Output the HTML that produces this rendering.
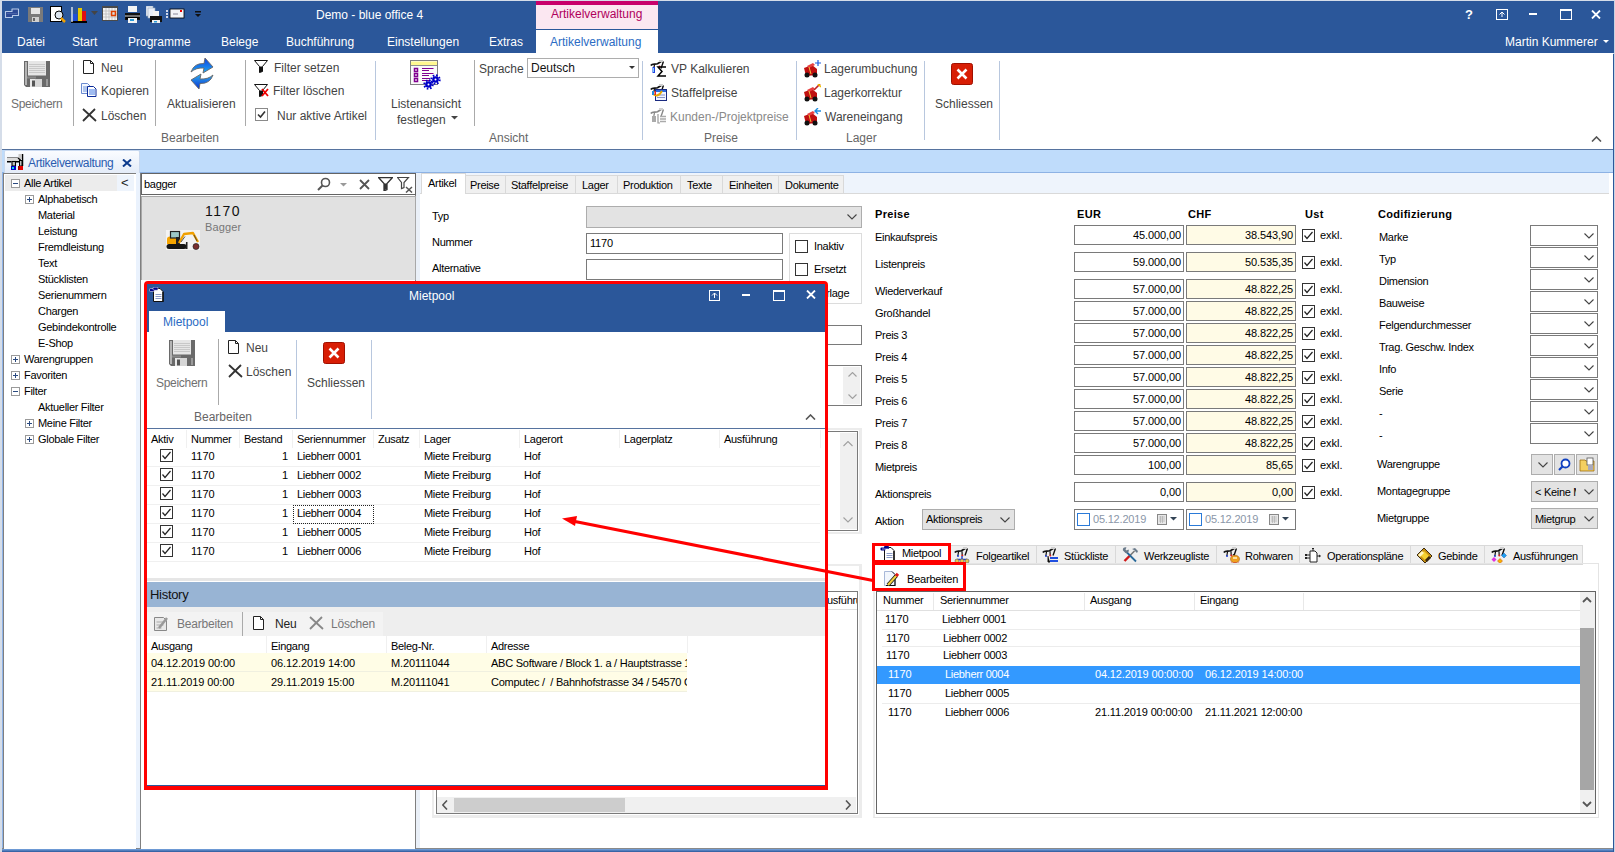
<!DOCTYPE html><html><head><meta charset="utf-8"><style>
html,body{margin:0;padding:0;}
body{width:1615px;height:852px;position:relative;overflow:hidden;background:#fff;font-family:"Liberation Sans", sans-serif;}
.a{position:absolute;box-sizing:border-box;}
.t{position:absolute;white-space:nowrap;}
</style></head><body>
<div class="a" style="left:0px;top:0px;width:1615px;height:852px;background:#d5dde9;"></div>
<div class="a" style="left:2px;top:1px;width:1612px;height:52px;background:#2b579a;"></div>
<svg class="a" style="left:4px;top:8px;" width="16" height="11" viewBox="0 0 16 11"><path d="M1.5 3.5 H8 V1 H14.5 V7.5 H8.5 V9.5 H1.5z" fill="#2c4a96" stroke="#b8cbe8" stroke-width="1.1" stroke-linejoin="round"/><path d="M3 5.5 H13" stroke="#4a64a8" stroke-width="1"/></svg>
<svg class="a" style="left:28px;top:7px;" width="15" height="15" viewBox="0 0 15 15"><rect x="0" y="0" width="15" height="15" fill="#7a7a7a"/><rect x="3" y="1" width="9" height="6" fill="#e5e5e5"/><rect x="4" y="10" width="7" height="5" fill="#d0d0d0"/><rect x="5" y="11" width="2" height="3" fill="#666"/></svg>
<svg class="a" style="left:50px;top:6px;" width="16" height="17" viewBox="0 0 16 17"><rect x="0.5" y="0.5" width="11" height="15" fill="#fff" stroke="#000"/><circle cx="9" cy="9" r="4" fill="#dde6f0" stroke="#000"/><path d="M11 12 l4 4" stroke="#f0a000" stroke-width="2.5"/></svg>
<svg class="a" style="left:71px;top:6px;" width="17" height="17" viewBox="0 0 17 17"><rect x="0" y="15" width="16" height="2" fill="#000"/><rect x="2" y="8" width="4" height="7" fill="#1f4fd8"/><rect x="7" y="2" width="4" height="13" fill="#e6c800"/><rect x="11" y="5" width="4" height="10" fill="#e01010"/><path d="M1 1 v15" stroke="#fff" stroke-width="1.2"/></svg>
<svg class="a" style="left:91px;top:11px;" width="7" height="5" viewBox="0 0 7 5"><path d="M0 0 h7 l-3.5 4z" fill="#444"/></svg>
<svg class="a" style="left:102px;top:6px;" width="16" height="15" viewBox="0 0 16 15"><rect x="0" y="0" width="16" height="15" fill="#4a4a4a"/><rect x="1" y="2" width="14" height="12" fill="#f2f2f2"/><path d="M1 5h14M1 8h14M1 11h14M4 2v12M7 2v12M10 2v12M13 2v12" stroke="#bbb" stroke-width="0.8"/><rect x="9.5" y="5.5" width="4" height="4" fill="none" stroke="#e04000" stroke-width="1.5"/></svg>
<svg class="a" style="left:124px;top:6px;" width="17" height="17" viewBox="0 0 17 17"><rect x="4" y="0" width="9" height="6" fill="#f4f4f4"/><path d="M1 7 h15 v7 h-15z" fill="#111"/><rect x="2" y="9" width="13" height="4" fill="#000"/><path d="M1 10 h15" stroke="#ddd"/><rect x="4" y="12" width="9" height="5" fill="#f4f4f4"/><rect x="6" y="13" width="4" height="2" fill="#2a9bd8"/></svg>
<svg class="a" style="left:146px;top:6px;" width="17" height="17" viewBox="0 0 17 17"><rect x="0" y="0" width="7" height="10" fill="#e8eef8" stroke="#9ab" stroke-width="0.6"/><rect x="2" y="2" width="7" height="10" fill="#e8eef8" stroke="#9ab" stroke-width="0.6"/><rect x="7" y="5" width="6" height="5" fill="#f4f4f4"/><path d="M4 10 h12 v6 h-12z" fill="#111"/><rect x="6" y="14" width="8" height="3" fill="#f0f0f0"/><rect x="8" y="15" width="3" height="1.5" fill="#2a9bd8"/></svg>
<svg class="a" style="left:166px;top:8px;" width="19" height="11" viewBox="0 0 19 11"><rect x="0" y="2" width="2" height="2" fill="#cfd8ea"/><rect x="0" y="5" width="2" height="2" fill="#cfd8ea"/><rect x="0" y="8" width="2" height="2" fill="#cfd8ea"/><rect x="4" y="1" width="14" height="9" fill="#f2f4f8" stroke="#000" stroke-width="0.8"/><rect x="14" y="2" width="2" height="2" fill="#e00"/><path d="M7 6 h5" stroke="#889" /></svg>
<svg class="a" style="left:195px;top:11px;" width="6" height="7" viewBox="0 0 6 7"><rect x="0" y="0" width="6" height="1.5" fill="#111"/><path d="M0 3 h6 l-3 3z" fill="#111"/></svg>
<div class="t " style="left:316px;top:7.84px;font-size:12px;line-height:14px;color:#fff;">Demo - blue office 4</div>
<div class="a" style="left:536px;top:1px;width:122px;height:4px;background:#c8006b;"></div>
<div class="a" style="left:536px;top:5px;width:122px;height:24px;background:#fbe7f1;"></div>
<div class="t " style="left:551px;top:6.84px;font-size:12px;line-height:14px;color:#b0005c;">Artikelverwaltung</div>
<div class="a" style="left:536px;top:29px;width:122px;height:1px;background:#2b579a;"></div>
<div class="a" style="left:536px;top:30px;width:122px;height:23px;background:#fff;"></div>
<div class="t " style="left:1465px;top:7.00px;font-size:13px;line-height:15px;color:#fff;"><b>?</b></div>
<svg class="a" style="left:1496px;top:9px;" width="12" height="11" viewBox="0 0 12 11"><rect x="0.5" y="0.5" width="11" height="10" fill="none" stroke="#fff"/><path d="M6 8 V3 M3.5 5.5 L6 3 L8.5 5.5" stroke="#fff" fill="none"/></svg>
<div class="a" style="left:1529px;top:13px;width:8px;height:2px;background:#fff;"></div>
<svg class="a" style="left:1560px;top:9px;" width="12" height="11" viewBox="0 0 12 11"><rect x="0.5" y="0.5" width="11" height="10" fill="none" stroke="#fff"/><rect x="0" y="0" width="12" height="2" fill="#fff"/></svg>
<svg class="a" style="left:1591px;top:10px;" width="10" height="9" viewBox="0 0 10 9"><path d="M1 0.5 L9 8.5 M9 0.5 L1 8.5" stroke="#fff" stroke-width="1.8"/></svg>
<div class="t " style="left:17px;top:34.84px;font-size:12px;line-height:14px;color:#fff;">Datei</div>
<div class="t " style="left:72px;top:34.84px;font-size:12px;line-height:14px;color:#fff;">Start</div>
<div class="t " style="left:128px;top:34.84px;font-size:12px;line-height:14px;color:#fff;">Programme</div>
<div class="t " style="left:221px;top:34.84px;font-size:12px;line-height:14px;color:#fff;">Belege</div>
<div class="t " style="left:286px;top:34.84px;font-size:12px;line-height:14px;color:#fff;">Buchführung</div>
<div class="t " style="left:387px;top:34.84px;font-size:12px;line-height:14px;color:#fff;">Einstellungen</div>
<div class="t " style="left:489px;top:34.84px;font-size:12px;line-height:14px;color:#fff;">Extras</div>
<div class="t " style="left:550px;top:34.84px;font-size:12px;line-height:14px;color:#2b6cc4;">Artikelverwaltung</div>
<div class="t " style="left:1505px;top:34.84px;font-size:12px;line-height:14px;color:#fff;">Martin Kummerer</div>
<svg class="a" style="left:1603px;top:40px;" width="6" height="4" viewBox="0 0 6 4"><path d="M0 0h6l-3 3z" fill="#fff"/></svg>
<div class="a" style="left:2px;top:53px;width:1611px;height:96px;background:#fff;"></div>
<div class="a" style="left:2px;top:149px;width:1611px;height:1px;background:#56739f;"></div>
<div class="a" style="left:2px;top:150px;width:1611px;height:23px;background:#bfdcfb;"></div>
<div class="a" style="left:2px;top:172px;width:1611px;height:1px;background:#8db2e4;"></div>
<svg class="a" style="left:24px;top:61px;" width="26" height="26" viewBox="0 0 26 26"><rect x="0" y="0" width="26" height="26" fill="#6a6a6a"/><rect x="1" y="1" width="2" height="23" fill="#b4b4b4"/><rect x="4" y="0" width="18" height="14.5" fill="#e6e6e6"/><path d="M5 3.5h16M5 5.5h16M5 7.5h16M5 9.5h16M5 11.5h16" stroke="#c4c4c4" stroke-width="0.9"/><rect x="3" y="15.5" width="9" height="2" fill="#8a8a8a"/><rect x="6" y="18" width="12" height="8" fill="#d6d6d6"/><rect x="6" y="18" width="5" height="8" fill="#e8e8e8"/><rect x="8" y="19.5" width="3" height="6" fill="#555"/><rect x="22" y="18" width="2" height="7" fill="#9a9a9a"/><path d="M0 24 L2 26 H0z" fill="#fff"/></svg>
<div class="t " style="left:11px;top:96.84px;font-size:12px;line-height:14px;color:#707070;letter-spacing:-0.3px;">Speichern</div>
<div class="a" style="left:73px;top:60px;width:1px;height:66px;background:#aaa;"></div>
<svg class="a" style="left:83px;top:60px;" width="12" height="15" viewBox="0 0 12 15"><path d="M0.5 0.5 h7 l3 3 v10 h-10z" fill="#fff" stroke="#222"/><path d="M7.5 0.5 v3 h3" fill="none" stroke="#222"/></svg>
<div class="t " style="left:101px;top:60.84px;font-size:12px;line-height:14px;color:#444;">Neu</div>
<svg class="a" style="left:81px;top:83px;" width="16" height="14" viewBox="0 0 16 14"><path d="M0.5 0.5 h6 l2.5 2.5 v7.5 h-8.5z" fill="#f4f8ff" stroke="#6a8ad0"/><path d="M2 4h5M2 6h5M2 8h4" stroke="#4a7ad0" stroke-width="0.8"/><path d="M6.5 3.5 h6 l2.5 2.5 v7.5 h-8.5z" fill="#fff" stroke="#0a2a9a"/><path d="M8 7h6M8 9h6M8 11h6" stroke="#2a6ae0" stroke-width="0.9"/></svg>
<div class="t " style="left:101px;top:83.84px;font-size:12px;line-height:14px;color:#444;">Kopieren</div>
<svg class="a" style="left:82px;top:108px;" width="15" height="14" viewBox="0 0 15 14"><path d="M1 1 L14 13 M13 1 L1 13" stroke="#333" stroke-width="1.8"/></svg>
<div class="t " style="left:101px;top:108.84px;font-size:12px;line-height:14px;color:#444;">Löschen</div>
<div class="a" style="left:155px;top:60px;width:1px;height:66px;background:#aaa;"></div>
<svg class="a" style="left:185px;top:57px;" width="34" height="34" viewBox="0 0 34 34"><defs><linearGradient id="ag" x1="0" y1="0" x2="0" y2="1"><stop offset="0" stop-color="#1040e0"/><stop offset="1" stop-color="#20a8f0"/></linearGradient><linearGradient id="ag2" x1="0" y1="1" x2="0" y2="0"><stop offset="0" stop-color="#0830d0"/><stop offset="1" stop-color="#30b0f0"/></linearGradient></defs><path d="M6 15 Q9 6 19 6.5 L20 1 L28 10 L18 16 L19 11 Q11 10.5 6 15z" fill="url(#ag)" stroke="#666" stroke-width="0.9" stroke-linejoin="round"/><path d="M28 18 Q25 27 15 26.5 L14 32 L6 23 L16 17 L15 22 Q23 22.5 28 18z" fill="url(#ag2)" stroke="#666" stroke-width="0.9" stroke-linejoin="round"/></svg>
<div class="t " style="left:167px;top:96.84px;font-size:12px;line-height:14px;color:#444;">Aktualisieren</div>
<div class="a" style="left:245px;top:60px;width:1px;height:66px;background:#aaa;"></div>
<svg class="a" style="left:254px;top:60px;" width="14" height="13" viewBox="0 0 14 13"><path d="M0.5 0.5 h13 l-5 6 v5 l-3 1 v-6z" fill="#fff" stroke="#111"/><path d="M5.5 6.5 v6 l3-1 v-5z" fill="#111"/></svg>
<div class="t " style="left:274px;top:60.84px;font-size:12px;line-height:14px;color:#444;">Filter setzen</div>
<svg class="a" style="left:254px;top:84px;" width="15" height="13" viewBox="0 0 15 13"><path d="M0.5 0.5 h13 l-5 6 v5 l-3 1 v-6z" fill="#fff" stroke="#111"/><path d="M5.5 6.5 v6 l3-1 v-5z" fill="#111"/><path d="M8 5 L14 12 M14 5 L8 12" stroke="#e00" stroke-width="1.8"/></svg>
<div class="t " style="left:273px;top:83.84px;font-size:12px;line-height:14px;color:#444;">Filter löschen</div>
<svg class="a" style="left:255px;top:108px;" width="14" height="14" viewBox="0 0 14 14"><rect x="0.5" y="0.5" width="12" height="12" fill="#fff" stroke="#8a8a8a"/><path d="M3 6.5 L5.5 9 L10 3.5" fill="none" stroke="#333" stroke-width="1.6"/></svg>
<div class="t " style="left:277px;top:108.84px;font-size:12px;line-height:14px;color:#444;">Nur aktive Artikel</div>
<div class="a" style="left:375px;top:61px;width:1px;height:79px;background:#b8c7de;"></div>
<div class="t " style="left:161px;top:130.84px;font-size:12px;line-height:14px;color:#666;">Bearbeiten</div>
<svg class="a" style="left:410px;top:60px;" width="31" height="31" viewBox="0 0 31 31"><rect x="0.5" y="0.5" width="27" height="24" fill="#fafafa" stroke="#808080"/><rect x="1" y="1.5" width="26" height="3.5" fill="#fff890"/><path d="M1 5.5h26" stroke="#909090"/><rect x="4.5" y="8.5" width="3" height="3" fill="none" stroke="#800090" stroke-width="1.5"/><rect x="4.5" y="13.5" width="3" height="3" fill="none" stroke="#800090" stroke-width="1.5"/><rect x="4.5" y="18.5" width="3" height="3" fill="none" stroke="#800090" stroke-width="1.5"/><path d="M12 8.5h11.5M12 10.5h7M12 13.5h11.5M12 15.5h7M12 18.5h8M12 20.5h7" stroke="#800090" stroke-width="1"/><circle cx="18.5" cy="24.5" r="4.2" fill="none" stroke="#0000c8" stroke-width="2" stroke-dasharray="1.6 1.7"/><circle cx="18.5" cy="24.5" r="3.3" fill="#0000c8"/><circle cx="18.5" cy="24.5" r="1" fill="#fff"/><circle cx="25.5" cy="19.5" r="4.2" fill="none" stroke="#0000c8" stroke-width="2" stroke-dasharray="1.6 1.7"/><circle cx="25.5" cy="19.5" r="3.3" fill="#0000c8"/><circle cx="25.5" cy="19.5" r="1" fill="#fff"/></svg>
<div class="t " style="left:391px;top:96.84px;font-size:12px;line-height:14px;color:#444;">Listenansicht</div>
<div class="t " style="left:397px;top:112.84px;font-size:12px;line-height:14px;color:#444;">festlegen</div>
<svg class="a" style="left:451px;top:116px;" width="7" height="4" viewBox="0 0 7 4"><path d="M0 0h7l-3.5 3.5z" fill="#444"/></svg>
<div class="a" style="left:474px;top:60px;width:1px;height:66px;background:#aaa;"></div>
<div class="t " style="left:479px;top:61.84px;font-size:12px;line-height:14px;color:#444;">Sprache</div>
<div class="a" style="left:527px;top:58px;width:112px;height:20px;background:#fff;border:1px solid #adadad;"></div>
<div class="t " style="left:531px;top:60.84px;font-size:12px;line-height:14px;color:#111;">Deutsch</div>
<svg class="a" style="left:629px;top:66px;" width="6" height="4" viewBox="0 0 6 4"><path d="M0 0h6l-3 3z" fill="#333"/></svg>
<div class="a" style="left:642px;top:61px;width:1px;height:79px;background:#b8c7de;"></div>
<div class="t " style="left:489px;top:130.84px;font-size:12px;line-height:14px;color:#666;">Ansicht</div>
<svg class="a" style="left:650px;top:60px;" width="17" height="17" viewBox="0 0 17 17"><path d="M0.8 5.5 C2.5 3.2 5 4.8 7.5 3.8 L11.5 1.2" stroke="#111" stroke-width="1.7" fill="none"/><path d="M11.8 0.8 L13.2 2.2 L11 8.5" stroke="#111" stroke-width="1.4" fill="none"/><path d="M4.5 5 L3.8 8" stroke="#111" stroke-width="1.2"/><rect x="9" y="0" width="4" height="2" fill="#d0d0d0"/><rect x="2.5" y="7" width="2.5" height="6" fill="#1f3fe0"/><rect x="3" y="8" width="1" height="4" fill="#7ad0ff"/><circle cx="9.5" cy="6.5" r="1" fill="#e02020"/><path d="M16 7 H8 L12 11.5 L8 16 H16" fill="none" stroke="#000" stroke-width="1.5"/></svg>
<div class="t " style="left:671px;top:61.84px;font-size:12px;line-height:14px;color:#444;">VP Kalkulieren</div>
<svg class="a" style="left:650px;top:84px;" width="17" height="17" viewBox="0 0 17 17"><path d="M0.8 5.5 C2.5 3.2 5 4.8 7.5 3.8 L11.5 1.2" stroke="#111" stroke-width="1.7" fill="none"/><path d="M11.8 0.8 L13.2 2.2 L11 8.5" stroke="#111" stroke-width="1.4" fill="none"/><path d="M4.5 5 L3.8 8" stroke="#111" stroke-width="1.2"/><rect x="9" y="0" width="4" height="2" fill="#d0d0d0"/><rect x="5.5" y="5.5" width="11" height="11" fill="#f0f4ff" stroke="#1a2a80"/><rect x="6" y="6" width="10" height="2" fill="#2a6ae0"/><path d="M7 11h8M7 13.5h8" stroke="#6a7ab8" stroke-width="0.8"/><path d="M3 10 Q8 14 12 7" stroke="#e8a800" stroke-width="2" fill="none"/><rect x="2" y="7" width="2" height="4" fill="#1f8fe0"/><rect x="4.5" y="7" width="1.5" height="4" fill="#e02020"/></svg>
<div class="t " style="left:671px;top:85.84px;font-size:12px;line-height:14px;color:#444;">Staffelpreise</div>
<svg class="a" style="left:650px;top:108px;" width="17" height="17" viewBox="0 0 17 17"><path d="M0.8 5.5 C2.5 3.2 5 4.8 7.5 3.8 L11.5 1.2" stroke="#888" stroke-width="1.7" fill="none"/><path d="M11.8 0.8 L13.2 2.2 L11 8.5" stroke="#888" stroke-width="1.4" fill="none"/><path d="M4.5 5 L3.8 8" stroke="#888" stroke-width="1.2"/><rect x="9" y="0" width="4" height="2" fill="#d0d0d0"/><rect x="2" y="8" width="4" height="6" fill="#aaa"/><path d="M8 6 V15 H10" stroke="#999" stroke-width="1.2" fill="none"/><path d="M10 8.5h6M10 11h6M10 13.5h6" stroke="#aaa" stroke-width="1.6"/></svg>
<div class="t " style="left:670px;top:109.84px;font-size:12px;line-height:14px;color:#8a8a8a;">Kunden-/Projektpreise</div>
<div class="a" style="left:796px;top:61px;width:1px;height:79px;background:#b8c7de;"></div>
<div class="t " style="left:704px;top:130.84px;font-size:12px;line-height:14px;color:#666;">Preise</div>
<svg class="a" style="left:803px;top:60px;" width="18" height="18" viewBox="0 0 18 18"><path d="M1 8 L9 5 L14 9 L14 15 L3 16z" fill="#c01010"/><path d="M4 6 L10 3 L12 5 L6 8z" fill="#e84040"/><circle cx="4" cy="15" r="2.5" fill="#111"/><circle cx="12" cy="15" r="2.5" fill="#111"/><path d="M6 7 l2 7" stroke="#f0c040" stroke-width="1"/><path d="M15 0 v6 M12 3 h6" stroke="#1f5fe0" stroke-width="1.2"/></svg>
<div class="t " style="left:824px;top:61.84px;font-size:12px;line-height:14px;color:#444;">Lagerumbuchung</div>
<svg class="a" style="left:803px;top:84px;" width="18" height="18" viewBox="0 0 18 18"><path d="M1 8 L9 5 L14 9 L14 15 L3 16z" fill="#c01010"/><path d="M4 6 L10 3 L12 5 L6 8z" fill="#e84040"/><circle cx="4" cy="15" r="2.5" fill="#111"/><circle cx="12" cy="15" r="2.5" fill="#111"/><path d="M6 7 l2 7" stroke="#f0c040" stroke-width="1"/><path d="M11 6 L17 0" stroke="#c02020" stroke-width="1.6"/><path d="M15 0 l3 3" stroke="#f0c000" stroke-width="1.6"/></svg>
<div class="t " style="left:824px;top:85.84px;font-size:12px;line-height:14px;color:#444;">Lagerkorrektur</div>
<svg class="a" style="left:803px;top:108px;" width="18" height="18" viewBox="0 0 18 18"><path d="M1 8 L9 5 L14 9 L14 15 L3 16z" fill="#c01010"/><path d="M4 6 L10 3 L12 5 L6 8z" fill="#e84040"/><circle cx="4" cy="15" r="2.5" fill="#111"/><circle cx="12" cy="15" r="2.5" fill="#111"/><path d="M6 7 l2 7" stroke="#f0c040" stroke-width="1"/><path d="M12 3 h6 M15 0 l-3 3 l3 3" stroke="#1f8fe0" stroke-width="1.4" fill="none"/></svg>
<div class="t " style="left:825px;top:109.84px;font-size:12px;line-height:14px;color:#444;">Wareneingang</div>
<div class="a" style="left:924px;top:61px;width:1px;height:79px;background:#b8c7de;"></div>
<div class="t " style="left:846px;top:130.84px;font-size:12px;line-height:14px;color:#666;">Lager</div>
<svg class="a" style="left:951px;top:63px;" width="22" height="22" viewBox="0 0 22 22"><rect x="0.5" y="0.5" width="21" height="21" rx="2" fill="#d81e05" stroke="#a01000"/><path d="M6.5 6.5 L15.5 15.5 M15.5 6.5 L6.5 15.5" stroke="#fff" stroke-width="2.6"/></svg>
<div class="t " style="left:935px;top:96.84px;font-size:12px;line-height:14px;color:#444;">Schliessen</div>
<div class="a" style="left:999px;top:61px;width:1px;height:79px;background:#b8c7de;"></div>
<svg class="a" style="left:1591px;top:136px;" width="11" height="6" viewBox="0 0 11 6"><path d="M1 5.5 L5.5 1 L10 5.5" fill="none" stroke="#555" stroke-width="1.6"/></svg>
<div class="a" style="left:4px;top:150px;width:136px;height:23px;background:linear-gradient(#fafcff,#e4ecf8);border:1px solid #c9d9ef;border-bottom:none;border-radius:2px 2px 0 0;"></div>
<svg class="a" style="left:4px;top:150px;" width="24" height="22" viewBox="0 0 24 22"><rect x="3" y="7" width="13" height="4.5" fill="#dcdcdc"/><path d="M3 7.5 H14" stroke="#888" stroke-width="1"/><path d="M3 11.8 H7.5 M11 11.8 H15" stroke="#000" stroke-width="1.4"/><rect x="14.5" y="4" width="4" height="5" fill="#c8c8c8"/><path d="M18.6 4 V16" stroke="#000" stroke-width="1.3"/><path d="M14 8 L17 10.5" stroke="#000" stroke-width="1.2"/><rect x="8" y="11.5" width="3.5" height="4.5" fill="#c0c0c0" stroke="#000" stroke-width="1.1"/><rect x="15.5" y="10.5" width="2.5" height="5.5" fill="#c0c0c0" stroke="#000" stroke-width="1"/><rect x="7" y="16" width="5" height="4" fill="#0000c8"/><rect x="8" y="17" width="2" height="2" fill="#00e0e8"/><rect x="14" y="16" width="5" height="4" fill="#e80000"/><rect x="14" y="16" width="1.5" height="4" fill="#900"/></svg>
<div class="t " style="left:28px;top:155.84px;font-size:12px;line-height:14px;color:#2a5cb0;letter-spacing:-0.35px;">Artikelverwaltung</div>
<svg class="a" style="left:122px;top:159px;" width="10" height="8" viewBox="0 0 10 8"><path d="M1 0.5 L9 7.5 M9 0.5 L1 7.5" stroke="#0c3a8c" stroke-width="2"/></svg>
<div class="a" style="left:2px;top:173px;width:1px;height:676px;background:#8fb4e8;"></div>
<div class="a" style="left:2px;top:848px;width:1611px;height:1px;background:#8a8a8a;"></div>
<div class="a" style="left:2px;top:849px;width:1611px;height:3px;background:linear-gradient(#7aa6e0,#2b579a);"></div>
<div class="a" style="left:1613px;top:54px;width:1px;height:798px;background:#2b579a;"></div>
<div class="a" style="left:1614px;top:0px;width:1px;height:852px;background:#c9d3e2;"></div>
<div class="a" style="left:1609px;top:173px;width:1px;height:675px;background:#c0c0c0;"></div>
<div class="a" style="left:3px;top:173px;width:134px;height:676px;background:#fff;border:1px solid #7f7f7f;border-bottom:none;"></div>
<div class="a" style="left:136px;top:173px;width:5px;height:675px;background:#eaf2fd;"></div>
<div class="a" style="left:5px;top:175px;width:112px;height:16px;background:#ececec;"></div>
<div class="a" style="left:117px;top:175px;width:17px;height:16px;background:#eef4fc;"></div>
<div class="t " style="left:121px;top:175.00px;font-size:13px;line-height:15px;color:#222;">&lt;</div>
<svg class="a" style="left:11px;top:179px;" width="9" height="9" viewBox="0 0 9 9"><rect x="0.5" y="0.5" width="8" height="8" fill="#fff" stroke="#9a9a9a"/><path d="M2 4.5h5" stroke="#2a4a80" stroke-width="1"/></svg>
<div class="t " style="left:24px;top:176.69px;font-size:11px;line-height:13px;color:#000;letter-spacing:-0.3px;">Alle Artikel</div>
<svg class="a" style="left:25px;top:195px;" width="9" height="9" viewBox="0 0 9 9"><rect x="0.5" y="0.5" width="8" height="8" fill="#fff" stroke="#9a9a9a"/><path d="M2 4.5h5M4.5 2v5" stroke="#2a4a80" stroke-width="1"/></svg>
<div class="t " style="left:38px;top:192.69px;font-size:11px;line-height:13px;color:#000;letter-spacing:-0.3px;">Alphabetisch</div>
<div class="t " style="left:38px;top:208.69px;font-size:11px;line-height:13px;color:#000;letter-spacing:-0.3px;">Material</div>
<div class="t " style="left:38px;top:224.69px;font-size:11px;line-height:13px;color:#000;letter-spacing:-0.3px;">Leistung</div>
<div class="t " style="left:38px;top:240.69px;font-size:11px;line-height:13px;color:#000;letter-spacing:-0.3px;">Fremdleistung</div>
<div class="t " style="left:38px;top:256.69px;font-size:11px;line-height:13px;color:#000;letter-spacing:-0.3px;">Text</div>
<div class="t " style="left:38px;top:272.69px;font-size:11px;line-height:13px;color:#000;letter-spacing:-0.3px;">Stücklisten</div>
<div class="t " style="left:38px;top:288.69px;font-size:11px;line-height:13px;color:#000;letter-spacing:-0.3px;">Serienummern</div>
<div class="t " style="left:38px;top:304.69px;font-size:11px;line-height:13px;color:#000;letter-spacing:-0.3px;">Chargen</div>
<div class="t " style="left:38px;top:320.69px;font-size:11px;line-height:13px;color:#000;letter-spacing:-0.3px;">Gebindekontrolle</div>
<div class="t " style="left:38px;top:336.69px;font-size:11px;line-height:13px;color:#000;letter-spacing:-0.3px;">E-Shop</div>
<svg class="a" style="left:11px;top:355px;" width="9" height="9" viewBox="0 0 9 9"><rect x="0.5" y="0.5" width="8" height="8" fill="#fff" stroke="#9a9a9a"/><path d="M2 4.5h5M4.5 2v5" stroke="#2a4a80" stroke-width="1"/></svg>
<div class="t " style="left:24px;top:352.69px;font-size:11px;line-height:13px;color:#000;letter-spacing:-0.3px;">Warengruppen</div>
<svg class="a" style="left:11px;top:371px;" width="9" height="9" viewBox="0 0 9 9"><rect x="0.5" y="0.5" width="8" height="8" fill="#fff" stroke="#9a9a9a"/><path d="M2 4.5h5M4.5 2v5" stroke="#2a4a80" stroke-width="1"/></svg>
<div class="t " style="left:24px;top:368.69px;font-size:11px;line-height:13px;color:#000;letter-spacing:-0.3px;">Favoriten</div>
<svg class="a" style="left:11px;top:387px;" width="9" height="9" viewBox="0 0 9 9"><rect x="0.5" y="0.5" width="8" height="8" fill="#fff" stroke="#9a9a9a"/><path d="M2 4.5h5" stroke="#2a4a80" stroke-width="1"/></svg>
<div class="t " style="left:24px;top:384.69px;font-size:11px;line-height:13px;color:#000;letter-spacing:-0.3px;">Filter</div>
<div class="t " style="left:38px;top:400.69px;font-size:11px;line-height:13px;color:#000;letter-spacing:-0.3px;">Aktueller Filter</div>
<svg class="a" style="left:25px;top:419px;" width="9" height="9" viewBox="0 0 9 9"><rect x="0.5" y="0.5" width="8" height="8" fill="#fff" stroke="#9a9a9a"/><path d="M2 4.5h5M4.5 2v5" stroke="#2a4a80" stroke-width="1"/></svg>
<div class="t " style="left:38px;top:416.69px;font-size:11px;line-height:13px;color:#000;letter-spacing:-0.3px;">Meine Filter</div>
<svg class="a" style="left:25px;top:435px;" width="9" height="9" viewBox="0 0 9 9"><rect x="0.5" y="0.5" width="8" height="8" fill="#fff" stroke="#9a9a9a"/><path d="M2 4.5h5M4.5 2v5" stroke="#2a4a80" stroke-width="1"/></svg>
<div class="t " style="left:38px;top:432.69px;font-size:11px;line-height:13px;color:#000;letter-spacing:-0.3px;">Globale Filter</div>
<div class="a" style="left:140px;top:173px;width:276px;height:676px;background:#fff;border-left:1px solid #7f7f7f;border-right:1px solid #7f7f7f;"></div>
<div class="a" style="left:416px;top:173px;width:4px;height:675px;background:#eaf0f8;"></div>
<div class="a" style="left:141px;top:173px;width:275px;height:22px;background:#fff;border:1px solid #646464;"></div>
<div class="t " style="left:144px;top:177.69px;font-size:11px;line-height:13px;color:#000;letter-spacing:-0.3px;">bagger</div>
<svg class="a" style="left:317px;top:177px;" width="14" height="14" viewBox="0 0 14 14"><circle cx="8.5" cy="5.5" r="4" fill="none" stroke="#555" stroke-width="1.6"/><path d="M5.5 8.5 L1 13" stroke="#555" stroke-width="2"/></svg>
<svg class="a" style="left:340px;top:183px;" width="7" height="4" viewBox="0 0 7 4"><path d="M0 0h7l-3.5 3.5z" fill="#999"/></svg>
<svg class="a" style="left:359px;top:179px;" width="11" height="11" viewBox="0 0 11 11"><path d="M1 1 L10 10 M10 1 L1 10" stroke="#555" stroke-width="1.8"/></svg>
<svg class="a" style="left:378px;top:177px;" width="15" height="14" viewBox="0 0 15 14"><path d="M0.5 0.5 h14 l-5.5 6 v6 l-3 1.5 v-7.5z" fill="#fff" stroke="#333" stroke-width="1.3"/><path d="M6 6.5 v7 l3-1.5 v-5.5z" fill="#333"/></svg>
<svg class="a" style="left:397px;top:177px;" width="16" height="16" viewBox="0 0 16 16"><path d="M0.5 0.5 h11 l-4.5 5 v5 l-2.5 1 v-6z" fill="#fff" stroke="#444" stroke-width="1.2"/><path d="M9 10 L15 15.5 M15 10 L9 15.5" stroke="#555" stroke-width="1.5"/></svg>
<div class="a" style="left:141px;top:196px;width:275px;height:84px;background:#e1e1e1;border:1px solid #a8a8a8;border-bottom:none;"></div>
<svg class="a" style="left:166px;top:230px;" width="34" height="20" viewBox="0 0 34 20"><rect x="0" y="0" width="34" height="20" fill="#f3f3f3"/><path d="M1 9 Q1 6.5 4 6.5 L11 6.5 L11 14 L1 14z" fill="#f5a400"/><rect x="4.5" y="1.5" width="9" height="6.5" fill="#9cc8c8" stroke="#222" stroke-width="1.2"/><rect x="10" y="7" width="4" height="7" fill="#222"/><rect x="0.5" y="14" width="20" height="5" rx="2.5" fill="#161616"/><path d="M20 12 L21.5 12 L21.5 19 L19.5 19z" fill="#222"/><path d="M13 13 L18 4 L27 3 L32 12" stroke="#f0a000" stroke-width="2.3" fill="none" stroke-linejoin="round"/><path d="M15 12 L19 6.5 M28 5 L31 11" stroke="#333" stroke-width="0.8"/><circle cx="30" cy="16.5" r="3" fill="#7a3030" stroke="#222" stroke-width="0.7"/></svg>
<div class="t " style="left:205px;top:202.65px;font-size:14px;line-height:17px;color:#111;letter-spacing:1.5px;">1170</div>
<div class="t " style="left:205px;top:220.69px;font-size:11px;line-height:13px;color:#777;letter-spacing:0.15px;">Bagger</div>
<div class="a" style="left:420px;top:173px;width:1193px;height:675px;background:#fff;"></div>
<div class="a" style="left:420px;top:173px;width:1189px;height:20px;background:#eef4fc;"></div>
<div class="a" style="left:420px;top:193px;width:1189px;height:1px;background:#d9d9d9;"></div>
<div class="a" style="left:465px;top:175px;width:41px;height:19px;background:#f0f0f0;border:1px solid #d9d9d9;"></div>
<div class="t " style="left:470px;top:178.69px;font-size:11px;line-height:13px;color:#000;letter-spacing:-0.3px;">Preise</div>
<div class="a" style="left:505px;top:175px;width:71px;height:19px;background:#f0f0f0;border:1px solid #d9d9d9;"></div>
<div class="t " style="left:511px;top:178.69px;font-size:11px;line-height:13px;color:#000;letter-spacing:-0.3px;">Staffelpreise</div>
<div class="a" style="left:575px;top:175px;width:43px;height:19px;background:#f0f0f0;border:1px solid #d9d9d9;"></div>
<div class="t " style="left:582px;top:178.69px;font-size:11px;line-height:13px;color:#000;letter-spacing:-0.3px;">Lager</div>
<div class="a" style="left:617px;top:175px;width:64px;height:19px;background:#f0f0f0;border:1px solid #d9d9d9;"></div>
<div class="t " style="left:623px;top:178.69px;font-size:11px;line-height:13px;color:#000;letter-spacing:-0.3px;">Produktion</div>
<div class="a" style="left:680px;top:175px;width:43px;height:19px;background:#f0f0f0;border:1px solid #d9d9d9;"></div>
<div class="t " style="left:687px;top:178.69px;font-size:11px;line-height:13px;color:#000;letter-spacing:-0.3px;">Texte</div>
<div class="a" style="left:722px;top:175px;width:57px;height:19px;background:#f0f0f0;border:1px solid #d9d9d9;"></div>
<div class="t " style="left:729px;top:178.69px;font-size:11px;line-height:13px;color:#000;letter-spacing:-0.3px;">Einheiten</div>
<div class="a" style="left:778px;top:175px;width:66px;height:19px;background:#f0f0f0;border:1px solid #d9d9d9;"></div>
<div class="t " style="left:785px;top:178.69px;font-size:11px;line-height:13px;color:#000;letter-spacing:-0.3px;">Dokumente</div>
<div class="a" style="left:421px;top:173px;width:45px;height:21px;background:#fff;border:1px solid #d9d9d9;border-bottom:none;"></div>
<div class="t " style="left:428px;top:176.69px;font-size:11px;line-height:13px;color:#000;letter-spacing:-0.3px;">Artikel</div>
<div class="t " style="left:432px;top:209.69px;font-size:11px;line-height:13px;color:#000;letter-spacing:-0.3px;">Typ</div>
<div class="a" style="left:586px;top:206px;width:276px;height:22px;background:#e3e3e3;border:1px solid #adadad;"></div>
<svg class="a" style="left:847px;top:214px;" width="10" height="6" viewBox="0 0 10 6"><path d="M0.5 0.5 L5 5 L9.5 0.5" fill="none" stroke="#444" stroke-width="1.1"/></svg>
<div class="t " style="left:432px;top:235.69px;font-size:11px;line-height:13px;color:#000;letter-spacing:-0.3px;">Nummer</div>
<div class="a" style="left:586px;top:233px;width:197px;height:21px;background:#fff;border:1px solid #7a7a7a;"></div>
<div class="t " style="left:590px;top:236.69px;font-size:11px;line-height:13px;color:#000;letter-spacing:-0.2px;">1170</div>
<div class="t " style="left:432px;top:261.69px;font-size:11px;line-height:13px;color:#000;letter-spacing:-0.3px;">Alternative</div>
<div class="a" style="left:586px;top:259px;width:197px;height:21px;background:#fff;border:1px solid #7a7a7a;"></div>
<div class="a" style="left:789px;top:233px;width:73px;height:71px;border:1px solid #dcdcdc;"></div>
<svg class="a" style="left:795px;top:240px;" width="14" height="14" viewBox="0 0 14 14"><rect x="0.5" y="0.5" width="12" height="12" fill="#fff" stroke="#333"/></svg>
<div class="t " style="left:814px;top:239.69px;font-size:11px;line-height:13px;color:#000;letter-spacing:-0.3px;">Inaktiv</div>
<svg class="a" style="left:795px;top:263px;" width="14" height="14" viewBox="0 0 14 14"><rect x="0.5" y="0.5" width="12" height="12" fill="#fff" stroke="#333"/></svg>
<div class="t " style="left:814px;top:262.69px;font-size:11px;line-height:13px;color:#000;letter-spacing:-0.3px;">Ersetzt</div>
<div class="t " style="left:814px;top:286.69px;font-size:11px;line-height:13px;color:#000;letter-spacing:-0.3px;">Vorlage</div>
<div class="a" style="left:700px;top:325px;width:162px;height:20px;background:#fff;border:1px solid #7a7a7a;"></div>
<div class="a" style="left:700px;top:365px;width:162px;height:41px;background:#fff;border:1px solid #7a7a7a;"></div>
<div class="a" style="left:843px;top:367px;width:17px;height:37px;background:#f0f0f0;"></div>
<svg class="a" style="left:848px;top:372px;" width="9" height="5" viewBox="0 0 9 5"><path d="M0.5 4.5 L4.5 0.5 L8.5 4.5" fill="none" stroke="#a0a0a0" stroke-width="1.1"/></svg>
<svg class="a" style="left:848px;top:394px;" width="9" height="5" viewBox="0 0 9 5"><path d="M0.5 0.5 L4.5 4.5 L8.5 0.5" fill="none" stroke="#a0a0a0" stroke-width="1.1"/></svg>
<div class="a" style="left:432px;top:428px;width:430px;height:106px;border:2px solid #ececec;border-right-width:3px;"></div>
<div class="a" style="left:436px;top:431px;width:422px;height:100px;background:#fff;border:1px solid #7a7a7a;"></div>
<div class="a" style="left:840px;top:433px;width:17px;height:96px;background:#f0f0f0;"></div>
<svg class="a" style="left:843px;top:441px;" width="10" height="6" viewBox="0 0 10 6"><path d="M0.5 5 L5 0.5 L9.5 5" fill="none" stroke="#a0a0a0" stroke-width="1.1"/></svg>
<svg class="a" style="left:843px;top:517px;" width="10" height="6" viewBox="0 0 10 6"><path d="M0.5 0.5 L5 5 L9.5 0.5" fill="none" stroke="#a0a0a0" stroke-width="1.1"/></svg>
<div class="a" style="left:432px;top:564px;width:430px;height:254px;border:2px solid #ececec;border-right-width:3px;border-bottom-width:3px;"></div>
<div class="a" style="left:436px;top:591px;width:422px;height:223px;background:#fff;border:1px solid #7a7a7a;"></div>
<div class="t " style="left:820px;top:593.69px;font-size:11px;line-height:13px;color:#000;letter-spacing:-0.3px;width:37px;overflow:hidden;">Ausführung</div>
<div class="a" style="left:437px;top:609px;width:420px;height:1px;background:#e0e0e0;"></div>
<div class="a" style="left:437px;top:797px;width:419px;height:16px;background:#f0f0f0;"></div>
<div class="a" style="left:454px;top:798px;width:171px;height:14px;background:#cdcdcd;"></div>
<svg class="a" style="left:442px;top:800px;" width="6" height="10" viewBox="0 0 6 10"><path d="M5 0.5 L0.8 5 L5 9.5" fill="none" stroke="#555" stroke-width="1.6"/></svg>
<svg class="a" style="left:845px;top:800px;" width="6" height="10" viewBox="0 0 6 10"><path d="M1 0.5 L5.2 5 L1 9.5" fill="none" stroke="#555" stroke-width="1.6"/></svg>
<div class="t " style="left:875px;top:207.69px;font-size:11px;line-height:13px;color:#000;letter-spacing:0.3px;"><b>Preise</b></div>
<div class="t " style="left:1077px;top:207.69px;font-size:11px;line-height:13px;color:#000;letter-spacing:0.3px;"><b>EUR</b></div>
<div class="t " style="left:1188px;top:207.69px;font-size:11px;line-height:13px;color:#000;letter-spacing:0.3px;"><b>CHF</b></div>
<div class="t " style="left:1305px;top:207.69px;font-size:11px;line-height:13px;color:#000;letter-spacing:0.3px;"><b>Ust</b></div>
<div class="t " style="left:1378px;top:207.69px;font-size:11px;line-height:13px;color:#000;letter-spacing:0.3px;"><b>Codifizierung</b></div>
<div class="t " style="left:875px;top:230.69px;font-size:11px;line-height:13px;color:#000;letter-spacing:-0.3px;">Einkaufspreis</div>
<div class="a" style="left:1074px;top:225px;width:110px;height:20px;background:#fff;border:1px solid #7a7a7a;"></div>
<div class="t" style="right:434px;top:228.69px;font-size:11px;line-height:13px;color:#000;letter-spacing:-0.1px;">45.000,00</div>
<div class="a" style="left:1186px;top:225px;width:110px;height:20px;background:#fffbe6;border:1px solid #7a7a7a;"></div>
<div class="t" style="right:322px;top:228.69px;font-size:11px;line-height:13px;color:#000;letter-spacing:-0.1px;">38.543,90</div>
<svg class="a" style="left:1302px;top:229px;" width="13" height="13" viewBox="0 0 13 13"><rect x="0.5" y="0.5" width="12" height="12" fill="#fff" stroke="#333"/><path d="M2.5 6.5 L5 9.5 L10.5 3" fill="none" stroke="#222" stroke-width="1.2"/></svg>
<div class="t " style="left:1320px;top:228.69px;font-size:11px;line-height:13px;color:#000;letter-spacing:0px;">exkl.</div>
<div class="t " style="left:875px;top:257.69px;font-size:11px;line-height:13px;color:#000;letter-spacing:-0.3px;">Listenpreis</div>
<div class="a" style="left:1074px;top:252px;width:110px;height:20px;background:#fff;border:1px solid #7a7a7a;"></div>
<div class="t" style="right:434px;top:255.69px;font-size:11px;line-height:13px;color:#000;letter-spacing:-0.1px;">59.000,00</div>
<div class="a" style="left:1186px;top:252px;width:110px;height:20px;background:#fffbe6;border:1px solid #7a7a7a;"></div>
<div class="t" style="right:322px;top:255.69px;font-size:11px;line-height:13px;color:#000;letter-spacing:-0.1px;">50.535,35</div>
<svg class="a" style="left:1302px;top:256px;" width="13" height="13" viewBox="0 0 13 13"><rect x="0.5" y="0.5" width="12" height="12" fill="#fff" stroke="#333"/><path d="M2.5 6.5 L5 9.5 L10.5 3" fill="none" stroke="#222" stroke-width="1.2"/></svg>
<div class="t " style="left:1320px;top:255.69px;font-size:11px;line-height:13px;color:#000;letter-spacing:0px;">exkl.</div>
<div class="t " style="left:875px;top:284.69px;font-size:11px;line-height:13px;color:#000;letter-spacing:-0.3px;">Wiederverkauf</div>
<div class="a" style="left:1074px;top:279px;width:110px;height:20px;background:#fff;border:1px solid #7a7a7a;"></div>
<div class="t" style="right:434px;top:282.69px;font-size:11px;line-height:13px;color:#000;letter-spacing:-0.1px;">57.000,00</div>
<div class="a" style="left:1186px;top:279px;width:110px;height:20px;background:#fffbe6;border:1px solid #7a7a7a;"></div>
<div class="t" style="right:322px;top:282.69px;font-size:11px;line-height:13px;color:#000;letter-spacing:-0.1px;">48.822,25</div>
<svg class="a" style="left:1302px;top:283px;" width="13" height="13" viewBox="0 0 13 13"><rect x="0.5" y="0.5" width="12" height="12" fill="#fff" stroke="#333"/><path d="M2.5 6.5 L5 9.5 L10.5 3" fill="none" stroke="#222" stroke-width="1.2"/></svg>
<div class="t " style="left:1320px;top:282.69px;font-size:11px;line-height:13px;color:#000;letter-spacing:0px;">exkl.</div>
<div class="t " style="left:875px;top:306.69px;font-size:11px;line-height:13px;color:#000;letter-spacing:-0.3px;">Großhandel</div>
<div class="a" style="left:1074px;top:301px;width:110px;height:20px;background:#fff;border:1px solid #7a7a7a;"></div>
<div class="t" style="right:434px;top:304.69px;font-size:11px;line-height:13px;color:#000;letter-spacing:-0.1px;">57.000,00</div>
<div class="a" style="left:1186px;top:301px;width:110px;height:20px;background:#fffbe6;border:1px solid #7a7a7a;"></div>
<div class="t" style="right:322px;top:304.69px;font-size:11px;line-height:13px;color:#000;letter-spacing:-0.1px;">48.822,25</div>
<svg class="a" style="left:1302px;top:305px;" width="13" height="13" viewBox="0 0 13 13"><rect x="0.5" y="0.5" width="12" height="12" fill="#fff" stroke="#333"/><path d="M2.5 6.5 L5 9.5 L10.5 3" fill="none" stroke="#222" stroke-width="1.2"/></svg>
<div class="t " style="left:1320px;top:304.69px;font-size:11px;line-height:13px;color:#000;letter-spacing:0px;">exkl.</div>
<div class="t " style="left:875px;top:328.69px;font-size:11px;line-height:13px;color:#000;letter-spacing:-0.3px;">Preis 3</div>
<div class="a" style="left:1074px;top:323px;width:110px;height:20px;background:#fff;border:1px solid #7a7a7a;"></div>
<div class="t" style="right:434px;top:326.69px;font-size:11px;line-height:13px;color:#000;letter-spacing:-0.1px;">57.000,00</div>
<div class="a" style="left:1186px;top:323px;width:110px;height:20px;background:#fffbe6;border:1px solid #7a7a7a;"></div>
<div class="t" style="right:322px;top:326.69px;font-size:11px;line-height:13px;color:#000;letter-spacing:-0.1px;">48.822,25</div>
<svg class="a" style="left:1302px;top:327px;" width="13" height="13" viewBox="0 0 13 13"><rect x="0.5" y="0.5" width="12" height="12" fill="#fff" stroke="#333"/><path d="M2.5 6.5 L5 9.5 L10.5 3" fill="none" stroke="#222" stroke-width="1.2"/></svg>
<div class="t " style="left:1320px;top:326.69px;font-size:11px;line-height:13px;color:#000;letter-spacing:0px;">exkl.</div>
<div class="t " style="left:875px;top:350.69px;font-size:11px;line-height:13px;color:#000;letter-spacing:-0.3px;">Preis 4</div>
<div class="a" style="left:1074px;top:345px;width:110px;height:20px;background:#fff;border:1px solid #7a7a7a;"></div>
<div class="t" style="right:434px;top:348.69px;font-size:11px;line-height:13px;color:#000;letter-spacing:-0.1px;">57.000,00</div>
<div class="a" style="left:1186px;top:345px;width:110px;height:20px;background:#fffbe6;border:1px solid #7a7a7a;"></div>
<div class="t" style="right:322px;top:348.69px;font-size:11px;line-height:13px;color:#000;letter-spacing:-0.1px;">48.822,25</div>
<svg class="a" style="left:1302px;top:349px;" width="13" height="13" viewBox="0 0 13 13"><rect x="0.5" y="0.5" width="12" height="12" fill="#fff" stroke="#333"/><path d="M2.5 6.5 L5 9.5 L10.5 3" fill="none" stroke="#222" stroke-width="1.2"/></svg>
<div class="t " style="left:1320px;top:348.69px;font-size:11px;line-height:13px;color:#000;letter-spacing:0px;">exkl.</div>
<div class="t " style="left:875px;top:372.69px;font-size:11px;line-height:13px;color:#000;letter-spacing:-0.3px;">Preis 5</div>
<div class="a" style="left:1074px;top:367px;width:110px;height:20px;background:#fff;border:1px solid #7a7a7a;"></div>
<div class="t" style="right:434px;top:370.69px;font-size:11px;line-height:13px;color:#000;letter-spacing:-0.1px;">57.000,00</div>
<div class="a" style="left:1186px;top:367px;width:110px;height:20px;background:#fffbe6;border:1px solid #7a7a7a;"></div>
<div class="t" style="right:322px;top:370.69px;font-size:11px;line-height:13px;color:#000;letter-spacing:-0.1px;">48.822,25</div>
<svg class="a" style="left:1302px;top:371px;" width="13" height="13" viewBox="0 0 13 13"><rect x="0.5" y="0.5" width="12" height="12" fill="#fff" stroke="#333"/><path d="M2.5 6.5 L5 9.5 L10.5 3" fill="none" stroke="#222" stroke-width="1.2"/></svg>
<div class="t " style="left:1320px;top:370.69px;font-size:11px;line-height:13px;color:#000;letter-spacing:0px;">exkl.</div>
<div class="t " style="left:875px;top:394.69px;font-size:11px;line-height:13px;color:#000;letter-spacing:-0.3px;">Preis 6</div>
<div class="a" style="left:1074px;top:389px;width:110px;height:20px;background:#fff;border:1px solid #7a7a7a;"></div>
<div class="t" style="right:434px;top:392.69px;font-size:11px;line-height:13px;color:#000;letter-spacing:-0.1px;">57.000,00</div>
<div class="a" style="left:1186px;top:389px;width:110px;height:20px;background:#fffbe6;border:1px solid #7a7a7a;"></div>
<div class="t" style="right:322px;top:392.69px;font-size:11px;line-height:13px;color:#000;letter-spacing:-0.1px;">48.822,25</div>
<svg class="a" style="left:1302px;top:393px;" width="13" height="13" viewBox="0 0 13 13"><rect x="0.5" y="0.5" width="12" height="12" fill="#fff" stroke="#333"/><path d="M2.5 6.5 L5 9.5 L10.5 3" fill="none" stroke="#222" stroke-width="1.2"/></svg>
<div class="t " style="left:1320px;top:392.69px;font-size:11px;line-height:13px;color:#000;letter-spacing:0px;">exkl.</div>
<div class="t " style="left:875px;top:416.69px;font-size:11px;line-height:13px;color:#000;letter-spacing:-0.3px;">Preis 7</div>
<div class="a" style="left:1074px;top:411px;width:110px;height:20px;background:#fff;border:1px solid #7a7a7a;"></div>
<div class="t" style="right:434px;top:414.69px;font-size:11px;line-height:13px;color:#000;letter-spacing:-0.1px;">57.000,00</div>
<div class="a" style="left:1186px;top:411px;width:110px;height:20px;background:#fffbe6;border:1px solid #7a7a7a;"></div>
<div class="t" style="right:322px;top:414.69px;font-size:11px;line-height:13px;color:#000;letter-spacing:-0.1px;">48.822,25</div>
<svg class="a" style="left:1302px;top:415px;" width="13" height="13" viewBox="0 0 13 13"><rect x="0.5" y="0.5" width="12" height="12" fill="#fff" stroke="#333"/><path d="M2.5 6.5 L5 9.5 L10.5 3" fill="none" stroke="#222" stroke-width="1.2"/></svg>
<div class="t " style="left:1320px;top:414.69px;font-size:11px;line-height:13px;color:#000;letter-spacing:0px;">exkl.</div>
<div class="t " style="left:875px;top:438.69px;font-size:11px;line-height:13px;color:#000;letter-spacing:-0.3px;">Preis 8</div>
<div class="a" style="left:1074px;top:433px;width:110px;height:20px;background:#fff;border:1px solid #7a7a7a;"></div>
<div class="t" style="right:434px;top:436.69px;font-size:11px;line-height:13px;color:#000;letter-spacing:-0.1px;">57.000,00</div>
<div class="a" style="left:1186px;top:433px;width:110px;height:20px;background:#fffbe6;border:1px solid #7a7a7a;"></div>
<div class="t" style="right:322px;top:436.69px;font-size:11px;line-height:13px;color:#000;letter-spacing:-0.1px;">48.822,25</div>
<svg class="a" style="left:1302px;top:437px;" width="13" height="13" viewBox="0 0 13 13"><rect x="0.5" y="0.5" width="12" height="12" fill="#fff" stroke="#333"/><path d="M2.5 6.5 L5 9.5 L10.5 3" fill="none" stroke="#222" stroke-width="1.2"/></svg>
<div class="t " style="left:1320px;top:436.69px;font-size:11px;line-height:13px;color:#000;letter-spacing:0px;">exkl.</div>
<div class="t " style="left:875px;top:460.69px;font-size:11px;line-height:13px;color:#000;letter-spacing:-0.3px;">Mietpreis</div>
<div class="a" style="left:1074px;top:455px;width:110px;height:20px;background:#fff;border:1px solid #7a7a7a;"></div>
<div class="t" style="right:434px;top:458.69px;font-size:11px;line-height:13px;color:#000;letter-spacing:-0.1px;">100,00</div>
<div class="a" style="left:1186px;top:455px;width:110px;height:20px;background:#fffbe6;border:1px solid #7a7a7a;"></div>
<div class="t" style="right:322px;top:458.69px;font-size:11px;line-height:13px;color:#000;letter-spacing:-0.1px;">85,65</div>
<svg class="a" style="left:1302px;top:459px;" width="13" height="13" viewBox="0 0 13 13"><rect x="0.5" y="0.5" width="12" height="12" fill="#fff" stroke="#333"/><path d="M2.5 6.5 L5 9.5 L10.5 3" fill="none" stroke="#222" stroke-width="1.2"/></svg>
<div class="t " style="left:1320px;top:458.69px;font-size:11px;line-height:13px;color:#000;letter-spacing:0px;">exkl.</div>
<div class="t " style="left:875px;top:487.69px;font-size:11px;line-height:13px;color:#000;letter-spacing:-0.3px;">Aktionspreis</div>
<div class="a" style="left:1074px;top:482px;width:110px;height:20px;background:#fff;border:1px solid #7a7a7a;"></div>
<div class="t" style="right:434px;top:485.69px;font-size:11px;line-height:13px;color:#000;letter-spacing:-0.1px;">0,00</div>
<div class="a" style="left:1186px;top:482px;width:110px;height:20px;background:#fffbe6;border:1px solid #7a7a7a;"></div>
<div class="t" style="right:322px;top:485.69px;font-size:11px;line-height:13px;color:#000;letter-spacing:-0.1px;">0,00</div>
<svg class="a" style="left:1302px;top:486px;" width="13" height="13" viewBox="0 0 13 13"><rect x="0.5" y="0.5" width="12" height="12" fill="#fff" stroke="#333"/><path d="M2.5 6.5 L5 9.5 L10.5 3" fill="none" stroke="#222" stroke-width="1.2"/></svg>
<div class="t " style="left:1320px;top:485.69px;font-size:11px;line-height:13px;color:#000;letter-spacing:0px;">exkl.</div>
<div class="t " style="left:875px;top:514.69px;font-size:11px;line-height:13px;color:#000;letter-spacing:-0.3px;">Aktion</div>
<div class="a" style="left:922px;top:509px;width:93px;height:21px;background:#e3e3e3;border:1px solid #adadad;"></div>
<div class="t " style="left:926px;top:512.69px;font-size:11px;line-height:13px;color:#000;letter-spacing:-0.3px;">Aktionspreis</div>
<svg class="a" style="left:1000px;top:517px;" width="10" height="6" viewBox="0 0 10 6"><path d="M0.5 0.5 L5 5 L9.5 0.5" fill="none" stroke="#444" stroke-width="1.1"/></svg>
<div class="a" style="left:1074px;top:509px;width:110px;height:21px;background:#fff;border:1px solid #7a7a7a;"></div>
<svg class="a" style="left:1077px;top:513px;" width="13" height="13" viewBox="0 0 13 13"><rect x="0.5" y="0.5" width="12" height="12" fill="#fff" stroke="#2a7ad8"/></svg>
<div class="t " style="left:1093px;top:512.69px;font-size:11px;line-height:13px;color:#8a96a8;letter-spacing:-0.2px;">05.12.2019</div>
<svg class="a" style="left:1157px;top:514px;" width="11" height="12" viewBox="0 0 11 12"><rect x="0.5" y="0.5" width="9" height="10" fill="#e8e8e8" stroke="#888"/><path d="M2 3h6M2 5h6M2 7h6M3.5 2v7M5.5 2v7" stroke="#aaa" stroke-width="0.6"/></svg>
<svg class="a" style="left:1170px;top:517px;" width="7" height="4" viewBox="0 0 7 4"><path d="M0 0h7l-3.5 3.5z" fill="#345"/></svg>
<div class="a" style="left:1186px;top:509px;width:110px;height:21px;background:#fff;border:1px solid #7a7a7a;"></div>
<svg class="a" style="left:1189px;top:513px;" width="13" height="13" viewBox="0 0 13 13"><rect x="0.5" y="0.5" width="12" height="12" fill="#fff" stroke="#2a7ad8"/></svg>
<div class="t " style="left:1205px;top:512.69px;font-size:11px;line-height:13px;color:#8a96a8;letter-spacing:-0.2px;">05.12.2019</div>
<svg class="a" style="left:1269px;top:514px;" width="11" height="12" viewBox="0 0 11 12"><rect x="0.5" y="0.5" width="9" height="10" fill="#e8e8e8" stroke="#888"/><path d="M2 3h6M2 5h6M2 7h6M3.5 2v7M5.5 2v7" stroke="#aaa" stroke-width="0.6"/></svg>
<svg class="a" style="left:1282px;top:517px;" width="7" height="4" viewBox="0 0 7 4"><path d="M0 0h7l-3.5 3.5z" fill="#345"/></svg>
<div class="t " style="left:1379px;top:230.69px;font-size:11px;line-height:13px;color:#000;letter-spacing:-0.3px;">Marke</div>
<div class="a" style="left:1530px;top:225px;width:68px;height:21px;background:#fff;border:1px solid #7a7a7a;"></div>
<svg class="a" style="left:1584px;top:233px;" width="10" height="6" viewBox="0 0 10 6"><path d="M0.5 0.5 L5 5 L9.5 0.5" fill="none" stroke="#444" stroke-width="1.1"/></svg>
<div class="t " style="left:1379px;top:252.69px;font-size:11px;line-height:13px;color:#000;letter-spacing:-0.3px;">Typ</div>
<div class="a" style="left:1530px;top:247px;width:68px;height:21px;background:#fff;border:1px solid #7a7a7a;"></div>
<svg class="a" style="left:1584px;top:255px;" width="10" height="6" viewBox="0 0 10 6"><path d="M0.5 0.5 L5 5 L9.5 0.5" fill="none" stroke="#444" stroke-width="1.1"/></svg>
<div class="t " style="left:1379px;top:274.69px;font-size:11px;line-height:13px;color:#000;letter-spacing:-0.3px;">Dimension</div>
<div class="a" style="left:1530px;top:269px;width:68px;height:21px;background:#fff;border:1px solid #7a7a7a;"></div>
<svg class="a" style="left:1584px;top:277px;" width="10" height="6" viewBox="0 0 10 6"><path d="M0.5 0.5 L5 5 L9.5 0.5" fill="none" stroke="#444" stroke-width="1.1"/></svg>
<div class="t " style="left:1379px;top:296.69px;font-size:11px;line-height:13px;color:#000;letter-spacing:-0.3px;">Bauweise</div>
<div class="a" style="left:1530px;top:291px;width:68px;height:21px;background:#fff;border:1px solid #7a7a7a;"></div>
<svg class="a" style="left:1584px;top:299px;" width="10" height="6" viewBox="0 0 10 6"><path d="M0.5 0.5 L5 5 L9.5 0.5" fill="none" stroke="#444" stroke-width="1.1"/></svg>
<div class="t " style="left:1379px;top:318.69px;font-size:11px;line-height:13px;color:#000;letter-spacing:-0.3px;">Felgendurchmesser</div>
<div class="a" style="left:1530px;top:313px;width:68px;height:21px;background:#fff;border:1px solid #7a7a7a;"></div>
<svg class="a" style="left:1584px;top:321px;" width="10" height="6" viewBox="0 0 10 6"><path d="M0.5 0.5 L5 5 L9.5 0.5" fill="none" stroke="#444" stroke-width="1.1"/></svg>
<div class="t " style="left:1379px;top:340.69px;font-size:11px;line-height:13px;color:#000;letter-spacing:-0.3px;">Trag. Geschw. Index</div>
<div class="a" style="left:1530px;top:335px;width:68px;height:21px;background:#fff;border:1px solid #7a7a7a;"></div>
<svg class="a" style="left:1584px;top:343px;" width="10" height="6" viewBox="0 0 10 6"><path d="M0.5 0.5 L5 5 L9.5 0.5" fill="none" stroke="#444" stroke-width="1.1"/></svg>
<div class="t " style="left:1379px;top:362.69px;font-size:11px;line-height:13px;color:#000;letter-spacing:-0.3px;">Info</div>
<div class="a" style="left:1530px;top:357px;width:68px;height:21px;background:#fff;border:1px solid #7a7a7a;"></div>
<svg class="a" style="left:1584px;top:365px;" width="10" height="6" viewBox="0 0 10 6"><path d="M0.5 0.5 L5 5 L9.5 0.5" fill="none" stroke="#444" stroke-width="1.1"/></svg>
<div class="t " style="left:1379px;top:384.69px;font-size:11px;line-height:13px;color:#000;letter-spacing:-0.3px;">Serie</div>
<div class="a" style="left:1530px;top:379px;width:68px;height:21px;background:#fff;border:1px solid #7a7a7a;"></div>
<svg class="a" style="left:1584px;top:387px;" width="10" height="6" viewBox="0 0 10 6"><path d="M0.5 0.5 L5 5 L9.5 0.5" fill="none" stroke="#444" stroke-width="1.1"/></svg>
<div class="t " style="left:1379px;top:406.69px;font-size:11px;line-height:13px;color:#000;letter-spacing:-0.3px;">-</div>
<div class="a" style="left:1530px;top:401px;width:68px;height:21px;background:#fff;border:1px solid #7a7a7a;"></div>
<svg class="a" style="left:1584px;top:409px;" width="10" height="6" viewBox="0 0 10 6"><path d="M0.5 0.5 L5 5 L9.5 0.5" fill="none" stroke="#444" stroke-width="1.1"/></svg>
<div class="t " style="left:1379px;top:428.69px;font-size:11px;line-height:13px;color:#000;letter-spacing:-0.3px;">-</div>
<div class="a" style="left:1530px;top:423px;width:68px;height:21px;background:#fff;border:1px solid #7a7a7a;"></div>
<svg class="a" style="left:1584px;top:431px;" width="10" height="6" viewBox="0 0 10 6"><path d="M0.5 0.5 L5 5 L9.5 0.5" fill="none" stroke="#444" stroke-width="1.1"/></svg>
<div class="t " style="left:1377px;top:457.69px;font-size:11px;line-height:13px;color:#000;letter-spacing:-0.3px;">Warengruppe</div>
<div class="a" style="left:1531px;top:454px;width:22px;height:21px;background:#e3e3e3;border:1px solid #adadad;"></div>
<svg class="a" style="left:1538px;top:462px;" width="10" height="6" viewBox="0 0 10 6"><path d="M0.5 0.5 L5 5 L9.5 0.5" fill="none" stroke="#444" stroke-width="1.1"/></svg>
<div class="a" style="left:1554px;top:454px;width:21px;height:21px;background:#e3e3e3;border:1px solid #adadad;"></div>
<svg class="a" style="left:1558px;top:458px;" width="13" height="13" viewBox="0 0 13 13"><circle cx="7.5" cy="5.5" r="4" fill="#fff" stroke="#1040c0" stroke-width="1.8"/><path d="M4.5 8.5 L1 12" stroke="#1040c0" stroke-width="2.2"/></svg>
<div class="a" style="left:1576px;top:454px;width:22px;height:21px;background:#e3e3e3;border:1px solid #adadad;"></div>
<svg class="a" style="left:1579px;top:457px;" width="16" height="15" viewBox="0 0 16 15"><path d="M1 3 h5 l1 1 h8 v10 h-14z" fill="#f4d060" stroke="#a07010" stroke-width="0.8"/><rect x="8" y="1" width="6" height="7" fill="#fff" stroke="#555" stroke-width="0.8"/><rect x="9" y="8" width="5" height="5" fill="#aab" /></svg>
<div class="t " style="left:1377px;top:484.69px;font-size:11px;line-height:13px;color:#000;letter-spacing:-0.3px;">Montagegruppe</div>
<div class="a" style="left:1531px;top:481px;width:67px;height:21px;background:#e3e3e3;border:1px solid #adadad;"></div>
<div class="t " style="left:1535px;top:485.69px;font-size:11px;line-height:13px;color:#000;letter-spacing:-0.3px;width:41px;overflow:hidden;">&lt; Keine M</div>
<svg class="a" style="left:1584px;top:489px;" width="10" height="6" viewBox="0 0 10 6"><path d="M0.5 0.5 L5 5 L9.5 0.5" fill="none" stroke="#444" stroke-width="1.1"/></svg>
<div class="t " style="left:1377px;top:511.69px;font-size:11px;line-height:13px;color:#000;letter-spacing:-0.3px;">Mietgruppe</div>
<div class="a" style="left:1531px;top:508px;width:67px;height:21px;background:#e3e3e3;border:1px solid #adadad;"></div>
<div class="t " style="left:1535px;top:512.69px;font-size:11px;line-height:13px;color:#000;letter-spacing:-0.3px;width:41px;overflow:hidden;">Mietgruppe</div>
<svg class="a" style="left:1584px;top:516px;" width="10" height="6" viewBox="0 0 10 6"><path d="M0.5 0.5 L5 5 L9.5 0.5" fill="none" stroke="#444" stroke-width="1.1"/></svg>
<div class="a" style="left:950px;top:545px;width:87px;height:20px;background:#f0f0f0;border:1px solid #d9d9d9;"></div>
<div class="t " style="left:976px;top:549.69px;font-size:11px;line-height:13px;color:#000;letter-spacing:-0.3px;">Folgeartikel</div>
<svg class="a" style="left:954px;top:547px;" width="17" height="17" viewBox="0 0 17 17"><path d="M0.8 5.5 C2.5 3.2 5 4.8 7.5 3.8 L11.5 1.2" stroke="#111" stroke-width="1.7" fill="none"/><path d="M11.8 0.8 L13.2 2.2 L11 8.5" stroke="#111" stroke-width="1.4" fill="none"/><path d="M4.5 5 L3.8 9 M8 4.3 L8.2 8.5" stroke="#111" stroke-width="1.2"/><rect x="9" y="0" width="4" height="2" fill="#d0d0d0"/><circle cx="4" cy="9" r="1" fill="#1f3fd0"/><circle cx="8.3" cy="8.5" r="1" fill="#e02020"/><path d="M3 12.5 H13 M8 9 V12.5" stroke="#1f3fd0" stroke-width="1.4"/><circle cx="3" cy="14" r="2" fill="#e8c850" stroke="#555" stroke-width="0.6"/><circle cx="8" cy="14" r="2" fill="#e8c850" stroke="#555" stroke-width="0.6"/><circle cx="13" cy="14" r="2" fill="#e8c850" stroke="#555" stroke-width="0.6"/></svg>
<div class="a" style="left:1036px;top:545px;width:80px;height:20px;background:#f0f0f0;border:1px solid #d9d9d9;"></div>
<div class="t " style="left:1064px;top:549.69px;font-size:11px;line-height:13px;color:#000;letter-spacing:-0.3px;">Stückliste</div>
<svg class="a" style="left:1042px;top:547px;" width="17" height="17" viewBox="0 0 17 17"><path d="M0.8 5.5 C2.5 3.2 5 4.8 7.5 3.8 L11.5 1.2" stroke="#111" stroke-width="1.7" fill="none"/><path d="M11.8 0.8 L13.2 2.2 L11 8.5" stroke="#111" stroke-width="1.4" fill="none"/><path d="M4.5 5 L3.8 9 M8 4.3 L8.2 8.5" stroke="#111" stroke-width="1.2"/><rect x="9" y="0" width="4" height="2" fill="#d0d0d0"/><circle cx="4" cy="9" r="1" fill="#1f3fd0"/><circle cx="8.3" cy="8.5" r="1" fill="#e02020"/><path d="M6 9 V15 H8" stroke="#111" stroke-width="1"/><rect x="8" y="10" width="8" height="2" fill="#1f4fe0"/><rect x="8" y="13" width="8" height="2" fill="#1f4fe0"/></svg>
<div class="a" style="left:1115px;top:545px;width:102px;height:20px;background:#f0f0f0;border:1px solid #d9d9d9;"></div>
<div class="t " style="left:1144px;top:549.69px;font-size:11px;line-height:13px;color:#000;letter-spacing:-0.3px;">Werkzeugliste</div>
<svg class="a" style="left:1122px;top:547px;" width="17" height="17" viewBox="0 0 17 17"><path d="M2.5 14 L8.5 8" stroke="#d01818" stroke-width="2.4"/><path d="M8 8.5 L12.5 4" stroke="#777" stroke-width="1.6"/><path d="M10 2 L13 1 L16 4 L15 6 L12 3z" fill="#6a7a8a"/><path d="M14 14.5 L4 4.5" stroke="#2a6a9a" stroke-width="1.8"/><path d="M1 3.5 A2.5 2.5 0 0 1 4.5 0.5 L3.5 2.5 L4.5 3.5 L6.5 2.5 A2.5 2.5 0 0 1 3.5 6z" fill="#6a7a8a"/></svg>
<div class="a" style="left:1216px;top:545px;width:84px;height:20px;background:#f0f0f0;border:1px solid #d9d9d9;"></div>
<div class="t " style="left:1245px;top:549.69px;font-size:11px;line-height:13px;color:#000;letter-spacing:-0.3px;">Rohwaren</div>
<svg class="a" style="left:1223px;top:547px;" width="17" height="17" viewBox="0 0 17 17"><path d="M0.8 5.5 C2.5 3.2 5 4.8 7.5 3.8 L11.5 1.2" stroke="#111" stroke-width="1.7" fill="none"/><path d="M11.8 0.8 L13.2 2.2 L11 8.5" stroke="#111" stroke-width="1.4" fill="none"/><path d="M4.5 5 L3.8 9 M8 4.3 L8.2 8.5" stroke="#111" stroke-width="1.2"/><rect x="9" y="0" width="4" height="2" fill="#d0d0d0"/><circle cx="4" cy="9" r="1" fill="#1f3fd0"/><circle cx="8.3" cy="8.5" r="1" fill="#e02020"/><path d="M10 7 L11 8.5" stroke="#111"/><ellipse cx="12" cy="12" rx="4.5" ry="3.8" fill="#f0a020" stroke="#a06010" stroke-width="0.6"/><path d="M7.5 13 A4.5 3 0 0 0 16.5 13 L16 15.5 H8z" fill="#e02020"/><rect x="10" y="10" width="4" height="2" fill="#fbe0a0"/></svg>
<div class="a" style="left:1299px;top:545px;width:112px;height:20px;background:#f0f0f0;border:1px solid #d9d9d9;"></div>
<div class="t " style="left:1327px;top:549.69px;font-size:11px;line-height:13px;color:#000;letter-spacing:-0.3px;">Operationspläne</div>
<svg class="a" style="left:1305px;top:547px;" width="17" height="17" viewBox="0 0 17 17"><path d="M5 4 H10 L12 6 V15 H5z" fill="#fff" stroke="#222" stroke-width="1"/><path d="M8 4 V1 M7 1.5 H9" stroke="#222" stroke-width="1"/><path d="M1 8 H5 M1 11 H5 M12 9 H15" stroke="#222" stroke-width="1"/><rect x="0" y="7" width="2" height="2" fill="#222"/><rect x="0" y="10" width="2" height="2" fill="#222"/><path d="M14 8 L15.5 9 L14 10" stroke="#222" fill="none"/></svg>
<div class="a" style="left:1410px;top:545px;width:75px;height:20px;background:#f0f0f0;border:1px solid #d9d9d9;"></div>
<div class="t " style="left:1438px;top:549.69px;font-size:11px;line-height:13px;color:#000;letter-spacing:-0.3px;">Gebinde</div>
<svg class="a" style="left:1416px;top:547px;" width="17" height="17" viewBox="0 0 17 17"><path d="M1 8 L8 1 L16 9 L9 16z" fill="#c89010" stroke="#3a2a10" stroke-width="1"/><path d="M4 8 L8 4 L13 9 L9 13z" fill="#f4d030"/><path d="M2 8 L6 4 L8 6 L4 10z" fill="#fff6c0"/><path d="M9 13 L13 9 L15 11 L11 15z" fill="#3a2a10"/></svg>
<div class="a" style="left:1484px;top:545px;width:99px;height:20px;background:#f0f0f0;border:1px solid #d9d9d9;"></div>
<div class="t " style="left:1513px;top:549.69px;font-size:11px;line-height:13px;color:#000;letter-spacing:-0.3px;">Ausführungen</div>
<svg class="a" style="left:1491px;top:547px;" width="17" height="17" viewBox="0 0 17 17"><path d="M0.8 5.5 C2.5 3.2 5 4.8 7.5 3.8 L11.5 1.2" stroke="#111" stroke-width="1.7" fill="none"/><path d="M11.8 0.8 L13.2 2.2 L11 8.5" stroke="#111" stroke-width="1.4" fill="none"/><path d="M4.5 5 L3.8 9 M8 4.3 L8.2 8.5" stroke="#111" stroke-width="1.2"/><rect x="9" y="0" width="4" height="2" fill="#d0d0d0"/><circle cx="4" cy="9" r="1" fill="#1f3fd0"/><circle cx="8.3" cy="8.5" r="1" fill="#e02020"/><path d="M3 10 L5.5 12.5 L3 15 L0.5 12.5z" fill="#e030e0"/><path d="M9 11.5 L11.5 14 L9 16.5 L6.5 14z" fill="#f8b000" stroke="#c04000" stroke-width="0.5"/><path d="M13 6 L15.5 8.5 L13 11 L10.5 8.5z" fill="#20a0f0" stroke="#1060c0" stroke-width="0.5"/></svg>
<div class="a" style="left:873px;top:543px;width:76px;height:22px;background:#fff;"></div>
<svg class="a" style="left:880px;top:545px;" width="16" height="17" viewBox="0 0 16 17"><path d="M4.5 2.5 h6.5 l3 3 v10 h-9.5z" fill="#fff" stroke="#111"/><path d="M14 6 V16 H5" stroke="#111" stroke-width="1.4" fill="none"/><path d="M6.5 8.5h6M6.5 10.5h6M6.5 12.5h6" stroke="#8a9ac8"/><rect x="0.5" y="2.5" width="5" height="3" rx="1" fill="#00008a"/><rect x="4" y="1" width="5" height="3" rx="1" fill="#00008a"/><path d="M2 4 H8" stroke="#fff" stroke-width="0.6"/></svg>
<div class="t " style="left:902px;top:546.69px;font-size:11px;line-height:13px;color:#000;letter-spacing:-0.3px;">Mietpool</div>
<div class="a" style="left:873px;top:563px;width:726px;height:255px;border:1px solid #e4e4e4;border-left:2px solid #ececec;"></div>
<svg class="a" style="left:884px;top:571px;" width="15" height="16" viewBox="0 0 15 16"><path d="M0.5 0.5 h7.5 l3 3 v11 h-10.5z" fill="#f2f6fc" stroke="#a8b8d8"/><path d="M8 0.5 L11 3.5" stroke="#223" /><path d="M11 4 V14.5 H2" stroke="#111" stroke-width="1.2" fill="none"/><path d="M4 14 L12.5 4.5" stroke="#111" stroke-width="3.6"/><path d="M4 14 L12.5 4.5" stroke="#f0d040" stroke-width="2.2"/><path d="M12 5 L14 2.8" stroke="#e01818" stroke-width="3.2"/></svg>
<div class="t " style="left:907px;top:572.69px;font-size:11px;line-height:13px;color:#000;letter-spacing:-0.2px;">Bearbeiten</div>
<div class="a" style="left:876px;top:591px;width:720px;height:223px;background:#fff;border:1px solid #646464;"></div>
<div class="a" style="left:933px;top:593px;width:1px;height:17px;background:#e8e8e8;"></div>
<div class="a" style="left:1084px;top:593px;width:1px;height:17px;background:#e8e8e8;"></div>
<div class="a" style="left:1194px;top:593px;width:1px;height:17px;background:#e8e8e8;"></div>
<div class="a" style="left:1303px;top:593px;width:1px;height:17px;background:#e8e8e8;"></div>
<div class="a" style="left:877px;top:610px;width:703px;height:1px;background:#e0e0e0;"></div>
<div class="t " style="left:883px;top:593.69px;font-size:11px;line-height:13px;color:#000;letter-spacing:-0.3px;">Nummer</div>
<div class="t " style="left:940px;top:593.69px;font-size:11px;line-height:13px;color:#000;letter-spacing:-0.3px;">Seriennummer</div>
<div class="t " style="left:1090px;top:593.69px;font-size:11px;line-height:13px;color:#000;letter-spacing:-0.3px;">Ausgang</div>
<div class="t " style="left:1200px;top:593.69px;font-size:11px;line-height:13px;color:#000;letter-spacing:-0.3px;">Eingang</div>
<div class="a" style="left:1580px;top:592px;width:15px;height:221px;background:#f0f0f0;"></div>
<div class="a" style="left:1580px;top:628px;width:14px;height:162px;background:#a6a6a6;"></div>
<svg class="a" style="left:1582px;top:596px;" width="10" height="7" viewBox="0 0 10 7"><path d="M1 6 L5 2 L9 6" fill="none" stroke="#555" stroke-width="1.8"/></svg>
<svg class="a" style="left:1582px;top:801px;" width="10" height="7" viewBox="0 0 10 7"><path d="M1 1 L5 5 L9 1" fill="none" stroke="#555" stroke-width="1.8"/></svg>
<div class="a" style="left:882px;top:629px;width:698px;height:1px;background:#ececec;"></div>
<div class="a" style="left:882px;top:646px;width:698px;height:1px;background:#ececec;"></div>
<div class="a" style="left:882px;top:703px;width:698px;height:1px;background:#ececec;"></div>
<div class="a" style="left:877px;top:666px;width:703px;height:18px;background:#3399ff;"></div>
<div class="t " style="left:885px;top:612.69px;font-size:11px;line-height:13px;color:#000;letter-spacing:0px;">1170</div>
<div class="t " style="left:942px;top:612.69px;font-size:11px;line-height:13px;color:#000;letter-spacing:-0.3px;">Liebherr 0001</div>
<div class="t " style="left:886px;top:631.69px;font-size:11px;line-height:13px;color:#000;letter-spacing:0px;">1170</div>
<div class="t " style="left:943px;top:631.69px;font-size:11px;line-height:13px;color:#000;letter-spacing:-0.3px;">Liebherr 0002</div>
<div class="t " style="left:886px;top:648.69px;font-size:11px;line-height:13px;color:#000;letter-spacing:0px;">1170</div>
<div class="t " style="left:943px;top:648.69px;font-size:11px;line-height:13px;color:#000;letter-spacing:-0.3px;">Liebherr 0003</div>
<div class="t " style="left:888px;top:667.69px;font-size:11px;line-height:13px;color:#fff;letter-spacing:0px;">1170</div>
<div class="t " style="left:945px;top:667.69px;font-size:11px;line-height:13px;color:#fff;letter-spacing:-0.3px;">Liebherr 0004</div>
<div class="t " style="left:1095px;top:667.69px;font-size:11px;line-height:13px;color:#fff;letter-spacing:-0.15px;">04.12.2019 00:00:00</div>
<div class="t " style="left:1205px;top:667.69px;font-size:11px;line-height:13px;color:#fff;letter-spacing:-0.15px;">06.12.2019 14:00:00</div>
<div class="t " style="left:888px;top:686.69px;font-size:11px;line-height:13px;color:#000;letter-spacing:0px;">1170</div>
<div class="t " style="left:945px;top:686.69px;font-size:11px;line-height:13px;color:#000;letter-spacing:-0.3px;">Liebherr 0005</div>
<div class="t " style="left:888px;top:705.69px;font-size:11px;line-height:13px;color:#000;letter-spacing:0px;">1170</div>
<div class="t " style="left:945px;top:705.69px;font-size:11px;line-height:13px;color:#000;letter-spacing:-0.3px;">Liebherr 0006</div>
<div class="t " style="left:1095px;top:705.69px;font-size:11px;line-height:13px;color:#000;letter-spacing:-0.15px;">21.11.2019 00:00:00</div>
<div class="t " style="left:1205px;top:705.69px;font-size:11px;line-height:13px;color:#000;letter-spacing:-0.15px;">21.11.2021 12:00:00</div>
<div class="a" style="left:144px;top:281px;width:684px;height:509px;border:3px solid #ff0000;border-bottom-width:4px;border-radius:4px 4px 0 0;background:#fff;"></div>
<div class="a" style="left:147px;top:284px;width:678px;height:48px;background:#2b579a;"></div>
<svg class="a" style="left:149px;top:287px;" width="16" height="15" viewBox="0 0 16 15"><path d="M4.5 1.5 h6.5 l3 3 v10 h-9.5z" fill="#fff" stroke="#111"/><path d="M14 5 V15 H5" stroke="#111" stroke-width="1.4" fill="none"/><path d="M6.5 7.5h6M6.5 9.5h6M6.5 11.5h6" stroke="#8a9ac8"/><rect x="0.5" y="1.5" width="5" height="3" rx="1" fill="#00008a" stroke="#fff" stroke-width="0.5"/><rect x="4" y="0.2" width="5" height="3" rx="1" fill="#00008a" stroke="#fff" stroke-width="0.5"/></svg>
<div class="t " style="left:409px;top:288.84px;font-size:12px;line-height:14px;color:#fff;">Mietpool</div>
<svg class="a" style="left:709px;top:290px;" width="12" height="11" viewBox="0 0 12 11"><rect x="0.5" y="0.5" width="10" height="10" fill="none" stroke="#fff"/><path d="M5.5 8 V3 M3 5.5 L5.5 3 L8 5.5" stroke="#fff" fill="none"/></svg>
<div class="a" style="left:742px;top:294px;width:8px;height:2px;background:#fff;"></div>
<svg class="a" style="left:773px;top:290px;" width="12" height="11" viewBox="0 0 12 11"><rect x="0.5" y="0.5" width="11" height="10" fill="none" stroke="#fff"/><rect x="0" y="0" width="12" height="2" fill="#fff"/></svg>
<svg class="a" style="left:806px;top:290px;" width="10" height="9" viewBox="0 0 10 9"><path d="M1 0.5 L9 8.5 M9 0.5 L1 8.5" stroke="#fff" stroke-width="1.8"/></svg>
<div class="a" style="left:149px;top:311px;width:76px;height:21px;background:#fff;"></div>
<div class="t " style="left:163px;top:314.84px;font-size:12px;line-height:14px;color:#2b6cc4;">Mietpool</div>
<svg class="a" style="left:169px;top:340px;" width="26" height="26" viewBox="0 0 26 26"><rect x="0" y="0" width="26" height="26" fill="#6a6a6a"/><rect x="1" y="1" width="2" height="23" fill="#b4b4b4"/><rect x="4" y="0" width="18" height="14.5" fill="#e6e6e6"/><path d="M5 3.5h16M5 5.5h16M5 7.5h16M5 9.5h16M5 11.5h16" stroke="#c4c4c4" stroke-width="0.9"/><rect x="3" y="15.5" width="9" height="2" fill="#8a8a8a"/><rect x="6" y="18" width="12" height="8" fill="#d6d6d6"/><rect x="6" y="18" width="5" height="8" fill="#e8e8e8"/><rect x="8" y="19.5" width="3" height="6" fill="#555"/><rect x="22" y="18" width="2" height="7" fill="#9a9a9a"/><path d="M0 24 L2 26 H0z" fill="#fff"/></svg>
<div class="t " style="left:156px;top:375.84px;font-size:12px;line-height:14px;color:#707070;letter-spacing:-0.3px;">Speichern</div>
<div class="a" style="left:218px;top:339px;width:1px;height:66px;background:#aaa;"></div>
<svg class="a" style="left:228px;top:340px;" width="12" height="15" viewBox="0 0 12 15"><path d="M0.5 0.5 h7 l3 3 v10 h-10z" fill="#fff" stroke="#222"/><path d="M7.5 0.5 v3 h3" fill="none" stroke="#222"/></svg>
<div class="t " style="left:246px;top:340.84px;font-size:12px;line-height:14px;color:#444;">Neu</div>
<svg class="a" style="left:228px;top:364px;" width="15" height="14" viewBox="0 0 15 14"><path d="M1 1 L14 13 M13 1 L1 13" stroke="#333" stroke-width="1.8"/></svg>
<div class="t " style="left:246px;top:364.84px;font-size:12px;line-height:14px;color:#444;">Löschen</div>
<div class="a" style="left:296px;top:340px;width:1px;height:79px;background:#b8c7de;"></div>
<svg class="a" style="left:323px;top:342px;" width="22" height="22" viewBox="0 0 22 22"><rect x="0.5" y="0.5" width="21" height="21" rx="2" fill="#d81e05" stroke="#a01000"/><path d="M6.5 6.5 L15.5 15.5 M15.5 6.5 L6.5 15.5" stroke="#fff" stroke-width="2.6"/></svg>
<div class="t " style="left:307px;top:375.84px;font-size:12px;line-height:14px;color:#444;">Schliessen</div>
<div class="a" style="left:371px;top:340px;width:1px;height:79px;background:#b8c7de;"></div>
<div class="t " style="left:194px;top:409.84px;font-size:12px;line-height:14px;color:#666;">Bearbeiten</div>
<svg class="a" style="left:805px;top:414px;" width="11" height="6" viewBox="0 0 11 6"><path d="M1 5.5 L5.5 1 L10 5.5" fill="none" stroke="#555" stroke-width="1.6"/></svg>
<div class="a" style="left:147px;top:428px;width:678px;height:1px;background:#56739f;"></div>
<div class="t " style="left:151px;top:432.69px;font-size:11px;line-height:13px;color:#000;letter-spacing:-0.3px;">Aktiv</div>
<div class="t " style="left:191px;top:432.69px;font-size:11px;line-height:13px;color:#000;letter-spacing:-0.3px;">Nummer</div>
<div class="t " style="left:244px;top:432.69px;font-size:11px;line-height:13px;color:#000;letter-spacing:-0.3px;">Bestand</div>
<div class="t " style="left:297px;top:432.69px;font-size:11px;line-height:13px;color:#000;letter-spacing:-0.3px;">Seriennummer</div>
<div class="t " style="left:378px;top:432.69px;font-size:11px;line-height:13px;color:#000;letter-spacing:-0.3px;">Zusatz</div>
<div class="t " style="left:424px;top:432.69px;font-size:11px;line-height:13px;color:#000;letter-spacing:-0.3px;">Lager</div>
<div class="t " style="left:524px;top:432.69px;font-size:11px;line-height:13px;color:#000;letter-spacing:-0.3px;">Lagerort</div>
<div class="t " style="left:624px;top:432.69px;font-size:11px;line-height:13px;color:#000;letter-spacing:-0.3px;">Lagerplatz</div>
<div class="t " style="left:724px;top:432.69px;font-size:11px;line-height:13px;color:#000;letter-spacing:-0.3px;">Ausführung</div>
<div class="a" style="left:186px;top:430px;width:1px;height:18px;background:#f0f0f0;"></div>
<div class="a" style="left:239px;top:430px;width:1px;height:18px;background:#f0f0f0;"></div>
<div class="a" style="left:292px;top:430px;width:1px;height:18px;background:#f0f0f0;"></div>
<div class="a" style="left:373px;top:430px;width:1px;height:18px;background:#f0f0f0;"></div>
<div class="a" style="left:419px;top:430px;width:1px;height:18px;background:#f0f0f0;"></div>
<div class="a" style="left:519px;top:430px;width:1px;height:18px;background:#f0f0f0;"></div>
<div class="a" style="left:619px;top:430px;width:1px;height:18px;background:#f0f0f0;"></div>
<div class="a" style="left:719px;top:430px;width:1px;height:18px;background:#f0f0f0;"></div>
<div class="a" style="left:820px;top:430px;width:1px;height:18px;background:#f0f0f0;"></div>
<div class="a" style="left:147px;top:466px;width:673px;height:1px;background:#f0f0f0;"></div>
<svg class="a" style="left:160px;top:449px;" width="13" height="13" viewBox="0 0 13 13"><rect x="0.5" y="0.5" width="12" height="12" fill="#fff" stroke="#333"/><path d="M2.5 6.5 L5 9.5 L10.5 3" fill="none" stroke="#222" stroke-width="1.2"/></svg>
<div class="t " style="left:191px;top:449.69px;font-size:11px;line-height:13px;color:#000;letter-spacing:0px;">1170</div>
<div class="t" style="right:1327px;top:449.69px;font-size:11px;line-height:13px;color:#000;letter-spacing:0px;">1</div>
<div class="t " style="left:297px;top:449.69px;font-size:11px;line-height:13px;color:#000;letter-spacing:-0.3px;">Liebherr 0001</div>
<div class="t " style="left:424px;top:449.69px;font-size:11px;line-height:13px;color:#000;letter-spacing:-0.3px;">Miete Freiburg</div>
<div class="t " style="left:524px;top:449.69px;font-size:11px;line-height:13px;color:#000;letter-spacing:-0.3px;">Hof</div>
<div class="a" style="left:147px;top:485px;width:673px;height:1px;background:#f0f0f0;"></div>
<svg class="a" style="left:160px;top:468px;" width="13" height="13" viewBox="0 0 13 13"><rect x="0.5" y="0.5" width="12" height="12" fill="#fff" stroke="#333"/><path d="M2.5 6.5 L5 9.5 L10.5 3" fill="none" stroke="#222" stroke-width="1.2"/></svg>
<div class="t " style="left:191px;top:468.69px;font-size:11px;line-height:13px;color:#000;letter-spacing:0px;">1170</div>
<div class="t" style="right:1327px;top:468.69px;font-size:11px;line-height:13px;color:#000;letter-spacing:0px;">1</div>
<div class="t " style="left:297px;top:468.69px;font-size:11px;line-height:13px;color:#000;letter-spacing:-0.3px;">Liebherr 0002</div>
<div class="t " style="left:424px;top:468.69px;font-size:11px;line-height:13px;color:#000;letter-spacing:-0.3px;">Miete Freiburg</div>
<div class="t " style="left:524px;top:468.69px;font-size:11px;line-height:13px;color:#000;letter-spacing:-0.3px;">Hof</div>
<div class="a" style="left:147px;top:504px;width:673px;height:1px;background:#f0f0f0;"></div>
<svg class="a" style="left:160px;top:487px;" width="13" height="13" viewBox="0 0 13 13"><rect x="0.5" y="0.5" width="12" height="12" fill="#fff" stroke="#333"/><path d="M2.5 6.5 L5 9.5 L10.5 3" fill="none" stroke="#222" stroke-width="1.2"/></svg>
<div class="t " style="left:191px;top:487.69px;font-size:11px;line-height:13px;color:#000;letter-spacing:0px;">1170</div>
<div class="t" style="right:1327px;top:487.69px;font-size:11px;line-height:13px;color:#000;letter-spacing:0px;">1</div>
<div class="t " style="left:297px;top:487.69px;font-size:11px;line-height:13px;color:#000;letter-spacing:-0.3px;">Liebherr 0003</div>
<div class="t " style="left:424px;top:487.69px;font-size:11px;line-height:13px;color:#000;letter-spacing:-0.3px;">Miete Freiburg</div>
<div class="t " style="left:524px;top:487.69px;font-size:11px;line-height:13px;color:#000;letter-spacing:-0.3px;">Hof</div>
<div class="a" style="left:147px;top:523px;width:673px;height:1px;background:#f0f0f0;"></div>
<svg class="a" style="left:160px;top:506px;" width="13" height="13" viewBox="0 0 13 13"><rect x="0.5" y="0.5" width="12" height="12" fill="#fff" stroke="#333"/><path d="M2.5 6.5 L5 9.5 L10.5 3" fill="none" stroke="#222" stroke-width="1.2"/></svg>
<div class="t " style="left:191px;top:506.69px;font-size:11px;line-height:13px;color:#000;letter-spacing:0px;">1170</div>
<div class="t" style="right:1327px;top:506.69px;font-size:11px;line-height:13px;color:#000;letter-spacing:0px;">1</div>
<div class="t " style="left:297px;top:506.69px;font-size:11px;line-height:13px;color:#000;letter-spacing:-0.3px;">Liebherr 0004</div>
<div class="t " style="left:424px;top:506.69px;font-size:11px;line-height:13px;color:#000;letter-spacing:-0.3px;">Miete Freiburg</div>
<div class="t " style="left:524px;top:506.69px;font-size:11px;line-height:13px;color:#000;letter-spacing:-0.3px;">Hof</div>
<div class="a" style="left:147px;top:542px;width:673px;height:1px;background:#f0f0f0;"></div>
<svg class="a" style="left:160px;top:525px;" width="13" height="13" viewBox="0 0 13 13"><rect x="0.5" y="0.5" width="12" height="12" fill="#fff" stroke="#333"/><path d="M2.5 6.5 L5 9.5 L10.5 3" fill="none" stroke="#222" stroke-width="1.2"/></svg>
<div class="t " style="left:191px;top:525.69px;font-size:11px;line-height:13px;color:#000;letter-spacing:0px;">1170</div>
<div class="t" style="right:1327px;top:525.69px;font-size:11px;line-height:13px;color:#000;letter-spacing:0px;">1</div>
<div class="t " style="left:297px;top:525.69px;font-size:11px;line-height:13px;color:#000;letter-spacing:-0.3px;">Liebherr 0005</div>
<div class="t " style="left:424px;top:525.69px;font-size:11px;line-height:13px;color:#000;letter-spacing:-0.3px;">Miete Freiburg</div>
<div class="t " style="left:524px;top:525.69px;font-size:11px;line-height:13px;color:#000;letter-spacing:-0.3px;">Hof</div>
<div class="a" style="left:147px;top:561px;width:673px;height:1px;background:#f0f0f0;"></div>
<svg class="a" style="left:160px;top:544px;" width="13" height="13" viewBox="0 0 13 13"><rect x="0.5" y="0.5" width="12" height="12" fill="#fff" stroke="#333"/><path d="M2.5 6.5 L5 9.5 L10.5 3" fill="none" stroke="#222" stroke-width="1.2"/></svg>
<div class="t " style="left:191px;top:544.69px;font-size:11px;line-height:13px;color:#000;letter-spacing:0px;">1170</div>
<div class="t" style="right:1327px;top:544.69px;font-size:11px;line-height:13px;color:#000;letter-spacing:0px;">1</div>
<div class="t " style="left:297px;top:544.69px;font-size:11px;line-height:13px;color:#000;letter-spacing:-0.3px;">Liebherr 0006</div>
<div class="t " style="left:424px;top:544.69px;font-size:11px;line-height:13px;color:#000;letter-spacing:-0.3px;">Miete Freiburg</div>
<div class="t " style="left:524px;top:544.69px;font-size:11px;line-height:13px;color:#000;letter-spacing:-0.3px;">Hof</div>
<div class="a" style="left:293px;top:505px;width:81px;height:19px;border:1px dotted #222;"></div>
<div class="a" style="left:147px;top:578px;width:678px;height:3px;background:#e6e6e6;"></div>
<div class="a" style="left:147px;top:582px;width:678px;height:25px;background:#98b4d4;"></div>
<div class="t " style="left:150px;top:587.00px;font-size:13px;line-height:15px;color:#111;letter-spacing:-0.3px;">History</div>
<div class="a" style="left:147px;top:607px;width:678px;height:29px;background:#eeeeee;"></div>
<div class="a" style="left:147px;top:612px;width:236px;height:24px;background:#f3f3f3;"></div>
<svg class="a" style="left:154px;top:615px;" width="15" height="16" viewBox="0 0 15 16"><path d="M0.5 2.5 h9 l3 3 v10 h-12z" fill="#e8e8e8" stroke="#888"/><path d="M2.5 7h7M2.5 10h7M2.5 13h5" stroke="#aaa"/><path d="M5 13 L13 3" stroke="#999" stroke-width="2.5"/></svg>
<div class="t " style="left:177px;top:616.84px;font-size:12px;line-height:14px;color:#777;letter-spacing:-0.2px;">Bearbeiten</div>
<div class="a" style="left:242px;top:612px;width:1px;height:24px;background:#aaa;"></div>
<svg class="a" style="left:253px;top:616px;" width="12" height="15" viewBox="0 0 12 15"><path d="M0.5 0.5 h7 l3 3 v10 h-10z" fill="#fff" stroke="#222"/><path d="M7.5 0.5 v3 h3" fill="none" stroke="#222"/></svg>
<div class="t " style="left:275px;top:616.84px;font-size:12px;line-height:14px;color:#222;letter-spacing:-0.2px;">Neu</div>
<svg class="a" style="left:309px;top:616px;" width="15" height="14" viewBox="0 0 15 14"><path d="M1 1 L14 13 M13 1 L1 13" stroke="#888" stroke-width="1.8"/></svg>
<div class="t " style="left:331px;top:616.84px;font-size:12px;line-height:14px;color:#777;letter-spacing:-0.2px;">Löschen</div>
<div class="t " style="left:151px;top:639.69px;font-size:11px;line-height:13px;color:#000;letter-spacing:-0.3px;">Ausgang</div>
<div class="t " style="left:271px;top:639.69px;font-size:11px;line-height:13px;color:#000;letter-spacing:-0.3px;">Eingang</div>
<div class="t " style="left:391px;top:639.69px;font-size:11px;line-height:13px;color:#000;letter-spacing:-0.3px;">Beleg-Nr.</div>
<div class="t " style="left:491px;top:639.69px;font-size:11px;line-height:13px;color:#000;letter-spacing:-0.3px;">Adresse</div>
<div class="a" style="left:266px;top:636px;width:1px;height:17px;background:#f0f0f0;"></div>
<div class="a" style="left:386px;top:636px;width:1px;height:17px;background:#f0f0f0;"></div>
<div class="a" style="left:486px;top:636px;width:1px;height:17px;background:#f0f0f0;"></div>
<div class="a" style="left:687px;top:636px;width:1px;height:17px;background:#f0f0f0;"></div>
<div class="a" style="left:147px;top:653px;width:540px;height:19px;background:#fffde6;border-bottom:1px solid #f0f0e0;"></div>
<div class="t " style="left:151px;top:656.69px;font-size:11px;line-height:13px;color:#000;letter-spacing:-0.1px;">04.12.2019 00:00</div>
<div class="t " style="left:271px;top:656.69px;font-size:11px;line-height:13px;color:#000;letter-spacing:-0.1px;">06.12.2019 14:00</div>
<div class="t " style="left:391px;top:656.69px;font-size:11px;line-height:13px;color:#000;letter-spacing:-0.1px;">M.20111044</div>
<div class="t " style="left:491px;top:656.69px;font-size:11px;line-height:13px;color:#000;letter-spacing:-0.25px;width:196px;overflow:hidden;">ABC Software / Block 1. a / Hauptstrasse 1</div>
<div class="a" style="left:147px;top:672px;width:540px;height:20px;background:#fffde6;border-bottom:1px solid #f0f0e0;"></div>
<div class="t " style="left:151px;top:675.69px;font-size:11px;line-height:13px;color:#000;letter-spacing:-0.1px;">21.11.2019 00:00</div>
<div class="t " style="left:271px;top:675.69px;font-size:11px;line-height:13px;color:#000;letter-spacing:-0.1px;">29.11.2019 15:00</div>
<div class="t " style="left:391px;top:675.69px;font-size:11px;line-height:13px;color:#000;letter-spacing:-0.1px;">M.20111041</div>
<div class="t " style="left:491px;top:675.69px;font-size:11px;line-height:13px;color:#000;letter-spacing:-0.25px;width:196px;overflow:hidden;">Computec / &nbsp;/ Bahnhofstrasse 34 / 54570 Ort</div>
<div class="a" style="left:147px;top:785px;width:678px;height:1px;background:#2b579a;"></div>
<div class="a" style="left:872px;top:543px;width:79px;height:20px;border:3px solid #ff0000;"></div>
<div class="a" style="left:872px;top:562px;width:94px;height:29px;border:3px solid #ff0000;"></div>
<svg class="a" style="left:555px;top:510px;" width="320" height="75" viewBox="0 0 320 75"><path d="M575 0" /><line x1="20" y1="11.5" x2="318" y2="70.5" stroke="#ff0000" stroke-width="3.2"/><path d="M7 8.5 L22 6 L20 16z" fill="#ff0000"/></svg>
</body></html>
